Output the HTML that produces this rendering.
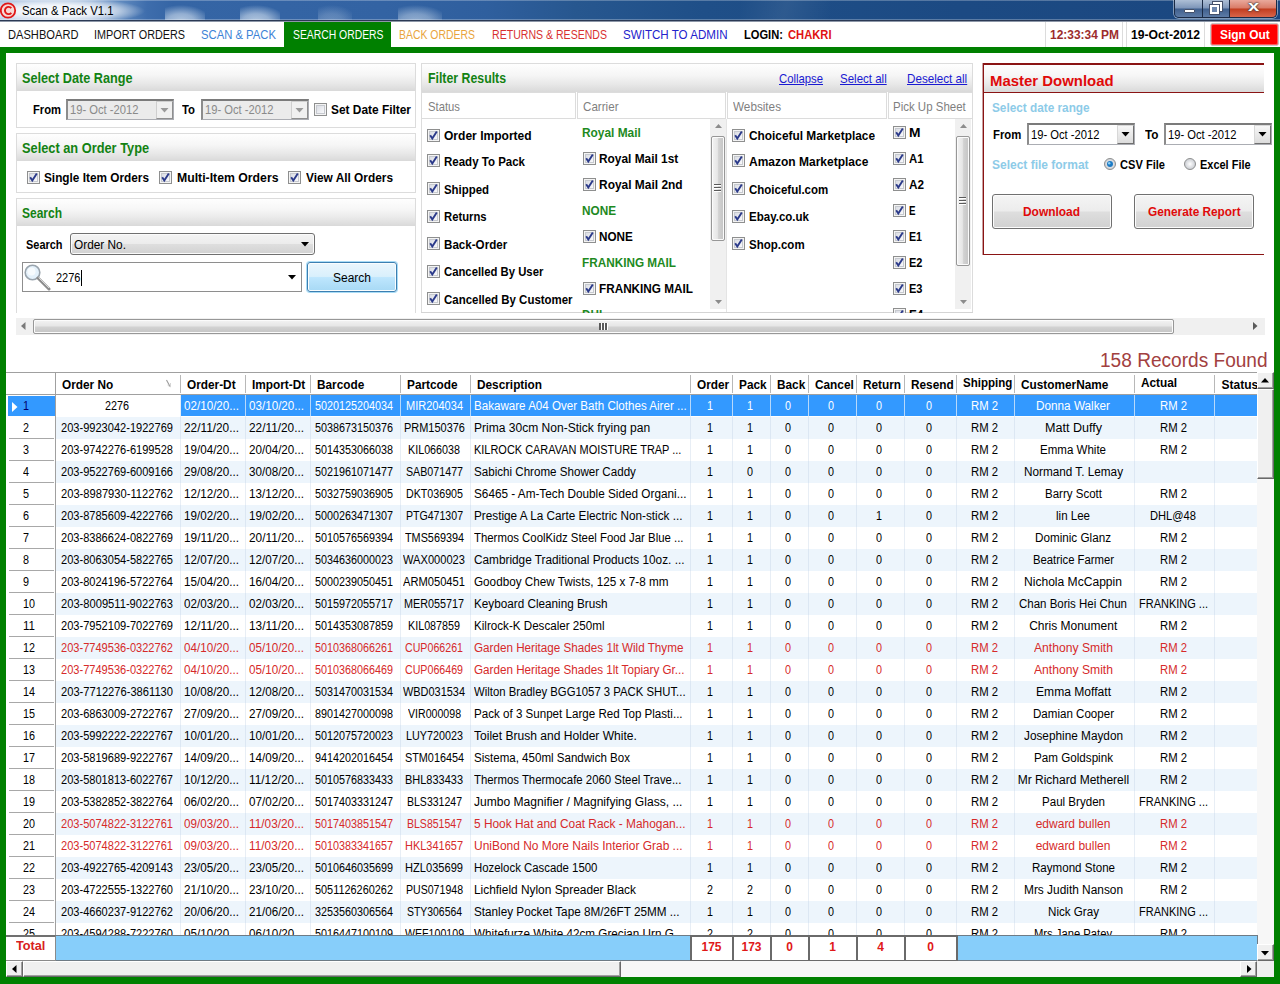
<!DOCTYPE html>
<html><head><meta charset="utf-8"><title>Scan &amp; Pack V1.1</title>
<style>
*{box-sizing:border-box;margin:0;padding:0}
html,body{width:1280px;height:984px;overflow:hidden;background:#fff}
body{font-family:"Liberation Sans",sans-serif;font-size:12px;color:#000;position:relative}
div,span,svg,.a{position:absolute}
span{white-space:pre;line-height:1.25;transform-origin:0 50%}
.cb{position:absolute}
.ph{background:linear-gradient(#fefefe,#f6f6f6 40%,#e9e9e9 70%,#d9d9d9)}
.panel{border:1px solid #dadada;background:#fff}
</style></head><body>
<svg width="0" height="0" style="position:absolute"><defs>
<linearGradient id="cbg" x1="0" y1="0" x2="1" y2="1"><stop offset="0" stop-color="#d8dbe2"/><stop offset="1" stop-color="#fbfbfd"/></linearGradient>
<radialGradient id="rbg" cx=".5" cy=".5" r=".5"><stop offset="0" stop-color="#fff"/><stop offset="1" stop-color="#c9ccd2"/></radialGradient>
</defs></svg>
<div style="left:0px;top:0px;width:1280px;height:21px;background:linear-gradient(90deg,#a9c1e0 0,#9ab6da 4%,#86a7d2 7%,#5f89be 9.5%,#3e6dac 11.5%,#3565a5 13.5%,#3363a3 30%,#2f5f9e 38%,#27578f 45%,#1f4f88 55%,#1c4a83 75%,#1b4780 100%)"></div>
<div style="left:-30px;top:-3px;width:175px;height:27px;background:radial-gradient(ellipse 50% 50% at 50% 52%,rgba(255,255,255,.92) 0,rgba(255,255,255,.85) 45%,rgba(255,255,255,.55) 70%,rgba(255,255,255,0) 100%)"></div>
<div style="left:165px;top:5px;width:40px;height:16px;background:radial-gradient(ellipse 75% 100% at 40% 100%,rgba(225,236,246,0.72) 0,rgba(215,228,242,0.58) 45%,rgba(200,218,238,0) 100%)"></div>
<div style="left:240px;top:5px;width:40px;height:16px;background:radial-gradient(ellipse 75% 100% at 40% 100%,rgba(225,236,246,0.72) 0,rgba(215,228,242,0.58) 45%,rgba(200,218,238,0) 100%)"></div>
<div style="left:318px;top:5px;width:34px;height:16px;background:radial-gradient(ellipse 75% 100% at 40% 100%,rgba(225,236,246,0.3) 0,rgba(215,228,242,0.24) 45%,rgba(200,218,238,0) 100%)"></div>
<div style="left:398px;top:5px;width:44px;height:16px;background:radial-gradient(ellipse 75% 100% at 40% 100%,rgba(225,236,246,0.55) 0,rgba(215,228,242,0.44) 45%,rgba(200,218,238,0) 100%)"></div>
<div style="left:740px;top:0px;width:90px;height:21px;background:linear-gradient(105deg,rgba(255,255,255,0) 0,rgba(255,255,255,.07) 50%,rgba(255,255,255,0) 100%)"></div>
<div style="left:0px;top:0px;width:1280px;height:1px;background:rgba(255,255,255,.25)"></div>
<svg style="left:0;top:2px" width="17" height="17" viewBox="0 0 17 17"><circle cx="8" cy="8.5" r="7.2" fill="#f6d9d6" stroke="#e01818" stroke-width="1.8"/><path d="M11.3 6.2 A3.6 3.6 0 1 0 11.3 10.8" fill="none" stroke="#e01818" stroke-width="1.9"/></svg>
<span style="left:21.5px;top:3.7px;font-size:12.5px;transform:scaleX(0.908);">Scan &amp; Pack V1.1</span>
<div style="left:0px;top:19px;width:1280px;height:1px;background:rgba(255,255,255,.28)"></div>
<div style="left:0px;top:20px;width:1280px;height:1px;background:#2b3a55"></div>
<div style="left:0px;top:21px;width:1280px;height:1px;background:#8d97a8"></div>
<div style="left:1174px;top:0;width:103px;height:18px;border:1px solid #1a2a45;border-top:none;border-radius:0 0 5px 5px;overflow:hidden;box-shadow:0 0 0 1px rgba(255,255,255,.45)"><div class="a" style="left:0;top:0;width:28px;height:17px;background:linear-gradient(#aebfd6,#7d95b8 48%,#3f5f8d 52%,#5d7ba6);border-right:1px solid #1a2a45"></div><div class="a" style="left:28px;top:0;width:27px;height:17px;background:linear-gradient(#aebfd6,#7d95b8 48%,#3f5f8d 52%,#5d7ba6);border-right:1px solid #1a2a45"></div><div class="a" style="left:55px;top:0;width:47px;height:17px;background:linear-gradient(#e9a99c,#d97a66 48%,#c13c1f 52%,#d8654a)"></div><div class="a" style="left:9px;top:9px;width:11px;height:4px;background:#fff;border:1px solid #44506a;border-radius:1px"></div><div class="a" style="left:38px;top:2px;width:9px;height:9px;border:2px solid #fff;outline:1px solid #44506a"></div><div class="a" style="left:35px;top:5px;width:9px;height:9px;border:2px solid #fff;outline:1px solid #44506a;background:#6d86ad"></div><span class="a" style="left:73px;top:-2px;font-size:15px;font-weight:bold;color:#fff;text-shadow:0 0 1px #333,0 0 1px #333,0 0 2px #555;line-height:16px;transform:scaleX(1.35)">x</span></div>
<div style="left:0px;top:22px;width:1280px;height:25px;background:#fff"></div>
<span style="left:8.0px;top:27.6px;font-size:12.5px;color:#111;transform:scaleX(0.890);">DASHBOARD</span>
<span style="left:93.5px;top:27.6px;font-size:12.5px;color:#111;transform:scaleX(0.866);">IMPORT ORDERS</span>
<span style="left:201.0px;top:27.6px;font-size:12.5px;color:#3c82d6;transform:scaleX(0.902);">SCAN &amp; PACK</span>
<div style="left:284px;top:22px;width:107px;height:25px;background:#008000"></div>
<span style="left:292.5px;top:27.6px;font-size:12.5px;color:#fff;transform:scaleX(0.830);">SEARCH ORDERS</span>
<span style="left:399.0px;top:27.6px;font-size:12.5px;color:#e9a43c;transform:scaleX(0.835);">BACK ORDERS</span>
<span style="left:492.0px;top:27.6px;font-size:12.5px;color:#d83030;transform:scaleX(0.845);">RETURNS &amp; RESENDS</span>
<span style="left:623.0px;top:27.6px;font-size:12.5px;color:#2222cc;transform:scaleX(0.927);">SWITCH TO ADMIN</span>
<span style="left:744.0px;top:27.6px;font-size:12.5px;font-weight:bold;transform:scaleX(0.890);">LOGIN: </span>
<span style="left:788.0px;top:27.6px;font-size:12.5px;font-weight:bold;color:#e01212;transform:scaleX(0.895);">CHAKRI</span>
<div style="left:1045px;top:22px;width:78px;height:25px;border-left:1px solid #dcdcdc;border-right:1px solid #dcdcdc;background:#fff"></div>
<span style="left:1049.7px;top:27.6px;font-size:12.5px;font-weight:bold;color:#9c2c2c;transform:scaleX(0.955);">12:33:34 PM</span>
<div style="left:1126px;top:22px;width:79px;height:25px;border-left:1px solid #dcdcdc;border-right:1px solid #dcdcdc;background:#fff"></div>
<span style="left:1131.0px;top:27.6px;font-size:12.5px;font-weight:bold;transform:scaleX(0.974);">19-Oct-2012</span>
<div style="left:1210px;top:23px;width:69px;height:23px;background:#f00;border:1px solid #c8c8c8;border-radius:3px;box-shadow:inset 0 0 0 1px #ff5a5a"></div>
<span style="left:1220.0px;top:27.6px;font-size:12.5px;font-weight:bold;color:#fff;transform:scaleX(0.954);">Sign Out</span>
<div style="left:0px;top:47px;width:1280px;height:6px;background:#008000"></div>
<div style="left:0px;top:47px;width:6px;height:937px;background:#008000"></div>
<div style="left:1274px;top:47px;width:6px;height:937px;background:#008000"></div>
<div style="left:0px;top:977px;width:1280px;height:7px;background:#008000"></div>
<div style="left:16px;top:63px;width:400px;height:65px;border:1px solid #dcdcdc;background:#fff;"></div>
<div class="ph" style="left:17px;top:64px;width:398px;height:27px;"></div>
<span style="left:22.0px;top:70.2px;font-size:14px;font-weight:bold;color:#128212;transform:scaleX(0.905);">Select Date Range</span>
<div style="left:16px;top:133px;width:400px;height:60px;border:1px solid #dcdcdc;background:#fff;"></div>
<div class="ph" style="left:17px;top:134px;width:398px;height:27px;"></div>
<span style="left:22.0px;top:140.2px;font-size:14px;font-weight:bold;color:#128212;transform:scaleX(0.914);">Select an Order Type</span>
<div style="left:16px;top:198px;width:400px;height:115px;border:1px solid #dcdcdc;background:#fff;border-bottom:none;"></div>
<div class="ph" style="left:17px;top:199px;width:398px;height:27px;"></div>
<span style="left:22.0px;top:204.7px;font-size:14px;font-weight:bold;color:#128212;transform:scaleX(0.857);">Search</span>
<span style="left:32.5px;top:101.7px;font-size:13px;font-weight:bold;transform:scaleX(0.862);">From</span>
<div style="left:66px;top:99px;width:108px;height:21px;background:#ebebeb;border:1px solid #abadb3;border-top:2px solid #7b7b7b;border-left:2px solid #8c8c8c"></div>
<span style="left:70.0px;top:103.2px;font-size:12.5px;color:#8a8a8a;transform:scaleX(0.896);">19- Oct -2012</span>
<div style="left:156px;top:101px;width:17px;height:18px;background:#f0f0f0;border:1px solid #cfcfcf;border-right-color:#8f8f8f;border-bottom-color:#8f8f8f"></div>
<svg style="left:160px;top:108px" width="9" height="5" viewBox="0 0 9 5"><path d="M0.5 0 L8.5 0 L4.5 4.5 Z" fill="#9a9a9a"/></svg>
<span style="left:182.0px;top:101.7px;font-size:13px;font-weight:bold;transform:scaleX(0.872);">To</span>
<div style="left:201px;top:99px;width:108px;height:21px;background:#ebebeb;border:1px solid #abadb3;border-top:2px solid #7b7b7b;border-left:2px solid #8c8c8c"></div>
<span style="left:205.0px;top:103.2px;font-size:12.5px;color:#8a8a8a;transform:scaleX(0.896);">19- Oct -2012</span>
<div style="left:291px;top:101px;width:17px;height:18px;background:#f0f0f0;border:1px solid #cfcfcf;border-right-color:#8f8f8f;border-bottom-color:#8f8f8f"></div>
<svg style="left:295px;top:108px" width="9" height="5" viewBox="0 0 9 5"><path d="M0.5 0 L8.5 0 L4.5 4.5 Z" fill="#9a9a9a"/></svg>
<svg class="cb" style="left:314px;top:103px" width="13" height="13" viewBox="0 0 13 13"><rect x=".5" y=".5" width="12" height="12" fill="#f4f4f4" stroke="#8e8f8f"/><rect x="2.5" y="2.5" width="8" height="8" fill="url(#cbg)" stroke="#c6c9cf"/></svg>
<span style="left:331.0px;top:101.7px;font-size:13px;font-weight:bold;transform:scaleX(0.915);">Set Date Filter</span>
<svg class="cb" style="left:27px;top:171px" width="13" height="13" viewBox="0 0 13 13"><rect x=".5" y=".5" width="12" height="12" fill="#f4f4f4" stroke="#8e8f8f"/><rect x="2.5" y="2.5" width="8" height="8" fill="url(#cbg)" stroke="#c6c9cf"/><path d="M3.2 6.3 L5.3 9.6 L9.8 2.6" fill="none" stroke="#2b3a8a" stroke-width="1.9" stroke-linejoin="miter"/></svg>
<span style="left:44.3px;top:169.9px;font-size:13px;font-weight:bold;transform:scaleX(0.908);">Single Item Orders</span>
<svg class="cb" style="left:159px;top:171px" width="13" height="13" viewBox="0 0 13 13"><rect x=".5" y=".5" width="12" height="12" fill="#f4f4f4" stroke="#8e8f8f"/><rect x="2.5" y="2.5" width="8" height="8" fill="url(#cbg)" stroke="#c6c9cf"/><path d="M3.2 6.3 L5.3 9.6 L9.8 2.6" fill="none" stroke="#2b3a8a" stroke-width="1.9" stroke-linejoin="miter"/></svg>
<span style="left:176.5px;top:169.9px;font-size:13px;font-weight:bold;transform:scaleX(0.943);">Multi-Item Orders</span>
<svg class="cb" style="left:288px;top:171px" width="13" height="13" viewBox="0 0 13 13"><rect x=".5" y=".5" width="12" height="12" fill="#f4f4f4" stroke="#8e8f8f"/><rect x="2.5" y="2.5" width="8" height="8" fill="url(#cbg)" stroke="#c6c9cf"/><path d="M3.2 6.3 L5.3 9.6 L9.8 2.6" fill="none" stroke="#2b3a8a" stroke-width="1.9" stroke-linejoin="miter"/></svg>
<span style="left:305.5px;top:169.9px;font-size:13px;font-weight:bold;transform:scaleX(0.912);">View All Orders</span>
<span style="left:25.5px;top:237.4px;font-size:13px;font-weight:bold;transform:scaleX(0.842);">Search</span>
<div style="left:70px;top:233px;width:245px;height:22px;border:1px solid #707070;border-radius:3px;background:linear-gradient(#f4f4f4,#ececec 48%,#dedede 52%,#d2d2d2);box-shadow:inset 0 0 0 1px #fbfbfb"></div>
<span style="left:73.5px;top:237.4px;font-size:13px;transform:scaleX(0.911);">Order No.</span>
<svg style="left:301px;top:242px" width="8" height="5" viewBox="0 0 8 5"><path d="M0 0 L8 0 L4 4.5 Z" fill="#000"/></svg>
<div style="left:22px;top:262px;width:280px;height:30px;border:1px solid #8e8e8e;background:#fff"></div>
<svg style="left:23px;top:263px" width="28" height="28" viewBox="0 0 28 28"><circle cx="9.5" cy="9.5" r="7.3" fill="#e4f1fb" stroke="#9aa4ad" stroke-width="1.6"/><circle cx="8.5" cy="8.5" r="4" fill="#f7fbfe"/><path d="M15 15 L26 26" stroke="#8c8c8c" stroke-width="3" stroke-linecap="round"/><path d="M15.5 14.5 L26 25" stroke="#d8d8d8" stroke-width="1"/></svg>
<span style="left:56.0px;top:271.2px;font-size:12.5px;transform:scaleX(0.881);">2276</span>
<div style="left:81px;top:270px;width:1px;height:16px;background:#000"></div>
<svg style="left:288px;top:275px" width="8" height="5" viewBox="0 0 8 5"><path d="M0 0 L8 0 L4 4.5 Z" fill="#000"/></svg>
<div style="left:307px;top:262px;width:90px;height:30px;border:1px solid #3c7fb1;border-radius:3px;background:linear-gradient(#eaf6fd,#d9f0fc 48%,#bee6fd 52%,#a7d9f5);box-shadow:inset 0 0 0 1px #fafdfe,0 0 0 1px #a9dcf6"></div>
<span style="left:333.0px;top:270.9px;font-size:12.5px;transform:scaleX(0.960);">Search</span>
<div style="left:421px;top:63px;width:552px;height:250px;border:1px solid #dcdcdc;border-bottom:none;background:#fff"></div>
<div class="ph" style="left:422px;top:64px;width:550px;height:28px;"></div>
<span style="left:427.5px;top:69.7px;font-size:14px;font-weight:bold;color:#128212;transform:scaleX(0.880);">Filter Results</span>
<span style="left:779.3px;top:70.7px;font-size:13px;color:#1a1ad2;transform:scaleX(0.870);text-decoration:underline;">Collapse</span>
<span style="left:840.3px;top:70.7px;font-size:13px;color:#1a1ad2;transform:scaleX(0.885);text-decoration:underline;">Select all</span>
<span style="left:907.0px;top:70.7px;font-size:13px;color:#1a1ad2;transform:scaleX(0.896);text-decoration:underline;">Deselect all</span>
<div style="left:422px;top:92px;width:550px;height:27px;background:#fff;border-top:1px solid #dcdcdc;border-bottom:1px solid #dcdcdc"></div>
<div style="left:575px;top:92px;width:3px;height:27px;background:#fff;border-left:1px solid #dcdcdc;border-right:1px solid #dcdcdc"></div>
<div style="left:725px;top:92px;width:3px;height:27px;background:#fff;border-left:1px solid #dcdcdc;border-right:1px solid #dcdcdc"></div>
<div style="left:886px;top:92px;width:3px;height:27px;background:#fff;border-left:1px solid #dcdcdc;border-right:1px solid #dcdcdc"></div>
<span style="left:428.4px;top:99.4px;font-size:13px;color:#7f7f7f;transform:scaleX(0.868);">Status</span>
<span style="left:582.9px;top:99.4px;font-size:13px;color:#7f7f7f;transform:scaleX(0.894);">Carrier</span>
<span style="left:733.0px;top:99.4px;font-size:13px;color:#7f7f7f;transform:scaleX(0.902);">Websites</span>
<span style="left:893.3px;top:99.4px;font-size:13px;color:#7f7f7f;transform:scaleX(0.883);">Pick Up Sheet</span>
<div style="left:726px;top:119px;width:1px;height:194px;background:#e4e4e4"></div>
<div style="left:421px;top:312px;width:552px;height:1px;background:#d4d4d4"></div>
<svg class="cb" style="left:427px;top:129px" width="13" height="13" viewBox="0 0 13 13"><rect x=".5" y=".5" width="12" height="12" fill="#f4f4f4" stroke="#8e8f8f"/><rect x="2.5" y="2.5" width="8" height="8" fill="url(#cbg)" stroke="#c6c9cf"/><path d="M3.2 6.3 L5.3 9.6 L9.8 2.6" fill="none" stroke="#2b3a8a" stroke-width="1.9" stroke-linejoin="miter"/></svg>
<span style="left:444.4px;top:128.1px;font-size:13px;font-weight:bold;transform:scaleX(0.926);">Order Imported</span>
<svg class="cb" style="left:427px;top:154px" width="13" height="13" viewBox="0 0 13 13"><rect x=".5" y=".5" width="12" height="12" fill="#f4f4f4" stroke="#8e8f8f"/><rect x="2.5" y="2.5" width="8" height="8" fill="url(#cbg)" stroke="#c6c9cf"/><path d="M3.2 6.3 L5.3 9.6 L9.8 2.6" fill="none" stroke="#2b3a8a" stroke-width="1.9" stroke-linejoin="miter"/></svg>
<span style="left:444.4px;top:153.9px;font-size:13px;font-weight:bold;transform:scaleX(0.885);">Ready To Pack</span>
<svg class="cb" style="left:427px;top:182px" width="13" height="13" viewBox="0 0 13 13"><rect x=".5" y=".5" width="12" height="12" fill="#f4f4f4" stroke="#8e8f8f"/><rect x="2.5" y="2.5" width="8" height="8" fill="url(#cbg)" stroke="#c6c9cf"/><path d="M3.2 6.3 L5.3 9.6 L9.8 2.6" fill="none" stroke="#2b3a8a" stroke-width="1.9" stroke-linejoin="miter"/></svg>
<span style="left:444.4px;top:181.5px;font-size:13px;font-weight:bold;transform:scaleX(0.878);">Shipped</span>
<svg class="cb" style="left:427px;top:210px" width="13" height="13" viewBox="0 0 13 13"><rect x=".5" y=".5" width="12" height="12" fill="#f4f4f4" stroke="#8e8f8f"/><rect x="2.5" y="2.5" width="8" height="8" fill="url(#cbg)" stroke="#c6c9cf"/><path d="M3.2 6.3 L5.3 9.6 L9.8 2.6" fill="none" stroke="#2b3a8a" stroke-width="1.9" stroke-linejoin="miter"/></svg>
<span style="left:444.4px;top:209.1px;font-size:13px;font-weight:bold;transform:scaleX(0.867);">Returns</span>
<svg class="cb" style="left:427px;top:237px" width="13" height="13" viewBox="0 0 13 13"><rect x=".5" y=".5" width="12" height="12" fill="#f4f4f4" stroke="#8e8f8f"/><rect x="2.5" y="2.5" width="8" height="8" fill="url(#cbg)" stroke="#c6c9cf"/><path d="M3.2 6.3 L5.3 9.6 L9.8 2.6" fill="none" stroke="#2b3a8a" stroke-width="1.9" stroke-linejoin="miter"/></svg>
<span style="left:444.4px;top:236.7px;font-size:13px;font-weight:bold;transform:scaleX(0.893);">Back-Order</span>
<svg class="cb" style="left:427px;top:265px" width="13" height="13" viewBox="0 0 13 13"><rect x=".5" y=".5" width="12" height="12" fill="#f4f4f4" stroke="#8e8f8f"/><rect x="2.5" y="2.5" width="8" height="8" fill="url(#cbg)" stroke="#c6c9cf"/><path d="M3.2 6.3 L5.3 9.6 L9.8 2.6" fill="none" stroke="#2b3a8a" stroke-width="1.9" stroke-linejoin="miter"/></svg>
<span style="left:444.4px;top:264.3px;font-size:13px;font-weight:bold;transform:scaleX(0.870);">Cancelled By User</span>
<svg class="cb" style="left:427px;top:292px" width="13" height="13" viewBox="0 0 13 13"><rect x=".5" y=".5" width="12" height="12" fill="#f4f4f4" stroke="#8e8f8f"/><rect x="2.5" y="2.5" width="8" height="8" fill="url(#cbg)" stroke="#c6c9cf"/><path d="M3.2 6.3 L5.3 9.6 L9.8 2.6" fill="none" stroke="#2b3a8a" stroke-width="1.9" stroke-linejoin="miter"/></svg>
<span style="left:444.4px;top:291.9px;font-size:13px;font-weight:bold;transform:scaleX(0.881);">Cancelled By Customer</span>
<span style="left:582.4px;top:125.0px;font-size:13px;font-weight:bold;color:#1e8a1e;transform:scaleX(0.915);">Royal Mail</span>
<svg class="cb" style="left:583px;top:152px" width="13" height="13" viewBox="0 0 13 13"><rect x=".5" y=".5" width="12" height="12" fill="#f4f4f4" stroke="#8e8f8f"/><rect x="2.5" y="2.5" width="8" height="8" fill="url(#cbg)" stroke="#c6c9cf"/><path d="M3.2 6.3 L5.3 9.6 L9.8 2.6" fill="none" stroke="#2b3a8a" stroke-width="1.9" stroke-linejoin="miter"/></svg>
<span style="left:599.4px;top:151.3px;font-size:13px;font-weight:bold;transform:scaleX(0.914);">Royal Mail 1st</span>
<svg class="cb" style="left:583px;top:178px" width="13" height="13" viewBox="0 0 13 13"><rect x=".5" y=".5" width="12" height="12" fill="#f4f4f4" stroke="#8e8f8f"/><rect x="2.5" y="2.5" width="8" height="8" fill="url(#cbg)" stroke="#c6c9cf"/><path d="M3.2 6.3 L5.3 9.6 L9.8 2.6" fill="none" stroke="#2b3a8a" stroke-width="1.9" stroke-linejoin="miter"/></svg>
<span style="left:599.4px;top:177.1px;font-size:13px;font-weight:bold;transform:scaleX(0.919);">Royal Mail 2nd</span>
<span style="left:582.4px;top:202.9px;font-size:13px;font-weight:bold;color:#1e8a1e;transform:scaleX(0.905);">NONE</span>
<svg class="cb" style="left:583px;top:230px" width="13" height="13" viewBox="0 0 13 13"><rect x=".5" y=".5" width="12" height="12" fill="#f4f4f4" stroke="#8e8f8f"/><rect x="2.5" y="2.5" width="8" height="8" fill="url(#cbg)" stroke="#c6c9cf"/><path d="M3.2 6.3 L5.3 9.6 L9.8 2.6" fill="none" stroke="#2b3a8a" stroke-width="1.9" stroke-linejoin="miter"/></svg>
<span style="left:599.4px;top:229.2px;font-size:13px;font-weight:bold;transform:scaleX(0.900);">NONE</span>
<span style="left:582.4px;top:254.5px;font-size:13px;font-weight:bold;color:#1e8a1e;transform:scaleX(0.904);">FRANKING MAIL</span>
<svg class="cb" style="left:583px;top:282px" width="13" height="13" viewBox="0 0 13 13"><rect x=".5" y=".5" width="12" height="12" fill="#f4f4f4" stroke="#8e8f8f"/><rect x="2.5" y="2.5" width="8" height="8" fill="url(#cbg)" stroke="#c6c9cf"/><path d="M3.2 6.3 L5.3 9.6 L9.8 2.6" fill="none" stroke="#2b3a8a" stroke-width="1.9" stroke-linejoin="miter"/></svg>
<span style="left:599.4px;top:281.0px;font-size:13px;font-weight:bold;transform:scaleX(0.903);">FRANKING MAIL</span>
<div style="left:576px;top:300px;width:134px;height:13px;overflow:hidden"><span class="a" style="left:6.4px;top:6.5px;font-size:13px;font-weight:bold;color:#1e8a1e;transform:scaleX(.9)">DHL</span></div>
<div style="left:710px;top:119px;width:16px;height:190px;background:#f0f0f0"></div>
<svg style="left:714.5px;top:124px" width="7" height="4" viewBox="0 0 7 4"><path d="M0 4 L3.5 0 L7 4 Z" fill="#8c8c8c"/></svg>
<svg style="left:714.5px;top:300px" width="7" height="4" viewBox="0 0 7 4"><path d="M0 0 L7 0 L3.5 4 Z" fill="#8c8c8c"/></svg>
<div style="left:711px;top:136px;width:14px;height:105px;border:1px solid #979797;border-radius:2px;background:linear-gradient(90deg,#f3f3f3,#e6e6e6 45%,#d2d2d2 55%,#c4c4c4);box-shadow:inset 0 0 0 1px #fbfbfb"></div>
<div style="left:714px;top:184px;width:7px;height:2px;background:#5a5a5a;border-bottom:1px solid #fff"></div>
<div style="left:714px;top:187px;width:7px;height:2px;background:#5a5a5a;border-bottom:1px solid #fff"></div>
<div style="left:714px;top:190px;width:7px;height:2px;background:#5a5a5a;border-bottom:1px solid #fff"></div>
<svg class="cb" style="left:732px;top:129px" width="13" height="13" viewBox="0 0 13 13"><rect x=".5" y=".5" width="12" height="12" fill="#f4f4f4" stroke="#8e8f8f"/><rect x="2.5" y="2.5" width="8" height="8" fill="url(#cbg)" stroke="#c6c9cf"/><path d="M3.2 6.3 L5.3 9.6 L9.8 2.6" fill="none" stroke="#2b3a8a" stroke-width="1.9" stroke-linejoin="miter"/></svg>
<span style="left:749.0px;top:128.1px;font-size:13px;font-weight:bold;transform:scaleX(0.913);">Choiceful Marketplace</span>
<svg class="cb" style="left:732px;top:154px" width="13" height="13" viewBox="0 0 13 13"><rect x=".5" y=".5" width="12" height="12" fill="#f4f4f4" stroke="#8e8f8f"/><rect x="2.5" y="2.5" width="8" height="8" fill="url(#cbg)" stroke="#c6c9cf"/><path d="M3.2 6.3 L5.3 9.6 L9.8 2.6" fill="none" stroke="#2b3a8a" stroke-width="1.9" stroke-linejoin="miter"/></svg>
<span style="left:749.0px;top:153.9px;font-size:13px;font-weight:bold;transform:scaleX(0.923);">Amazon Marketplace</span>
<svg class="cb" style="left:732px;top:182px" width="13" height="13" viewBox="0 0 13 13"><rect x=".5" y=".5" width="12" height="12" fill="#f4f4f4" stroke="#8e8f8f"/><rect x="2.5" y="2.5" width="8" height="8" fill="url(#cbg)" stroke="#c6c9cf"/><path d="M3.2 6.3 L5.3 9.6 L9.8 2.6" fill="none" stroke="#2b3a8a" stroke-width="1.9" stroke-linejoin="miter"/></svg>
<span style="left:749.0px;top:181.5px;font-size:13px;font-weight:bold;transform:scaleX(0.885);">Choiceful.com</span>
<svg class="cb" style="left:732px;top:210px" width="13" height="13" viewBox="0 0 13 13"><rect x=".5" y=".5" width="12" height="12" fill="#f4f4f4" stroke="#8e8f8f"/><rect x="2.5" y="2.5" width="8" height="8" fill="url(#cbg)" stroke="#c6c9cf"/><path d="M3.2 6.3 L5.3 9.6 L9.8 2.6" fill="none" stroke="#2b3a8a" stroke-width="1.9" stroke-linejoin="miter"/></svg>
<span style="left:749.0px;top:209.1px;font-size:13px;font-weight:bold;transform:scaleX(0.887);">Ebay.co.uk</span>
<svg class="cb" style="left:732px;top:237px" width="13" height="13" viewBox="0 0 13 13"><rect x=".5" y=".5" width="12" height="12" fill="#f4f4f4" stroke="#8e8f8f"/><rect x="2.5" y="2.5" width="8" height="8" fill="url(#cbg)" stroke="#c6c9cf"/><path d="M3.2 6.3 L5.3 9.6 L9.8 2.6" fill="none" stroke="#2b3a8a" stroke-width="1.9" stroke-linejoin="miter"/></svg>
<span style="left:749.0px;top:236.7px;font-size:13px;font-weight:bold;transform:scaleX(0.885);">Shop.com</span>
<svg class="cb" style="left:893px;top:126px" width="13" height="13" viewBox="0 0 13 13"><rect x=".5" y=".5" width="12" height="12" fill="#f4f4f4" stroke="#8e8f8f"/><rect x="2.5" y="2.5" width="8" height="8" fill="url(#cbg)" stroke="#c6c9cf"/><path d="M3.2 6.3 L5.3 9.6 L9.8 2.6" fill="none" stroke="#2b3a8a" stroke-width="1.9" stroke-linejoin="miter"/></svg>
<span style="left:909.3px;top:125.4px;font-size:13px;font-weight:bold;transform:scaleX(1.062);">M</span>
<svg class="cb" style="left:893px;top:152px" width="13" height="13" viewBox="0 0 13 13"><rect x=".5" y=".5" width="12" height="12" fill="#f4f4f4" stroke="#8e8f8f"/><rect x="2.5" y="2.5" width="8" height="8" fill="url(#cbg)" stroke="#c6c9cf"/><path d="M3.2 6.3 L5.3 9.6 L9.8 2.6" fill="none" stroke="#2b3a8a" stroke-width="1.9" stroke-linejoin="miter"/></svg>
<span style="left:909.3px;top:151.2px;font-size:13px;font-weight:bold;transform:scaleX(0.873);">A1</span>
<svg class="cb" style="left:893px;top:178px" width="13" height="13" viewBox="0 0 13 13"><rect x=".5" y=".5" width="12" height="12" fill="#f4f4f4" stroke="#8e8f8f"/><rect x="2.5" y="2.5" width="8" height="8" fill="url(#cbg)" stroke="#c6c9cf"/><path d="M3.2 6.3 L5.3 9.6 L9.8 2.6" fill="none" stroke="#2b3a8a" stroke-width="1.9" stroke-linejoin="miter"/></svg>
<span style="left:909.3px;top:177.0px;font-size:13px;font-weight:bold;transform:scaleX(0.903);">A2</span>
<svg class="cb" style="left:893px;top:204px" width="13" height="13" viewBox="0 0 13 13"><rect x=".5" y=".5" width="12" height="12" fill="#f4f4f4" stroke="#8e8f8f"/><rect x="2.5" y="2.5" width="8" height="8" fill="url(#cbg)" stroke="#c6c9cf"/><path d="M3.2 6.3 L5.3 9.6 L9.8 2.6" fill="none" stroke="#2b3a8a" stroke-width="1.9" stroke-linejoin="miter"/></svg>
<span style="left:909.3px;top:202.8px;font-size:13px;font-weight:bold;transform:scaleX(0.750);">E</span>
<svg class="cb" style="left:893px;top:230px" width="13" height="13" viewBox="0 0 13 13"><rect x=".5" y=".5" width="12" height="12" fill="#f4f4f4" stroke="#8e8f8f"/><rect x="2.5" y="2.5" width="8" height="8" fill="url(#cbg)" stroke="#c6c9cf"/><path d="M3.2 6.3 L5.3 9.6 L9.8 2.6" fill="none" stroke="#2b3a8a" stroke-width="1.9" stroke-linejoin="miter"/></svg>
<span style="left:909.3px;top:229.1px;font-size:13px;font-weight:bold;transform:scaleX(0.818);">E1</span>
<svg class="cb" style="left:893px;top:256px" width="13" height="13" viewBox="0 0 13 13"><rect x=".5" y=".5" width="12" height="12" fill="#f4f4f4" stroke="#8e8f8f"/><rect x="2.5" y="2.5" width="8" height="8" fill="url(#cbg)" stroke="#c6c9cf"/><path d="M3.2 6.3 L5.3 9.6 L9.8 2.6" fill="none" stroke="#2b3a8a" stroke-width="1.9" stroke-linejoin="miter"/></svg>
<span style="left:909.3px;top:254.9px;font-size:13px;font-weight:bold;transform:scaleX(0.849);">E2</span>
<svg class="cb" style="left:893px;top:282px" width="13" height="13" viewBox="0 0 13 13"><rect x=".5" y=".5" width="12" height="12" fill="#f4f4f4" stroke="#8e8f8f"/><rect x="2.5" y="2.5" width="8" height="8" fill="url(#cbg)" stroke="#c6c9cf"/><path d="M3.2 6.3 L5.3 9.6 L9.8 2.6" fill="none" stroke="#2b3a8a" stroke-width="1.9" stroke-linejoin="miter"/></svg>
<span style="left:909.3px;top:280.7px;font-size:13px;font-weight:bold;transform:scaleX(0.849);">E3</span>
<div style="left:888px;top:300px;width:66px;height:13px;overflow:hidden"><svg class="cb" style="left:5px;top:8px" width="13" height="13" viewBox="0 0 13 13"><rect x=".5" y=".5" width="12" height="12" fill="#f4f4f4" stroke="#8e8f8f"/><rect x="2.5" y="2.5" width="8" height="8" fill="url(#cbg)" stroke="#c6c9cf"/><path d="M3.2 6.3 L5.3 9.6 L9.8 2.6" fill="none" stroke="#2b3a8a" stroke-width="1.9" stroke-linejoin="miter"/></svg><span class="a" style="left:21.3px;top:6.5px;font-size:13px;font-weight:bold;transform:scaleX(.9)">E4</span></div>
<div style="left:955px;top:119px;width:16px;height:190px;background:#f0f0f0"></div>
<svg style="left:959.5px;top:124px" width="7" height="4" viewBox="0 0 7 4"><path d="M0 4 L3.5 0 L7 4 Z" fill="#8c8c8c"/></svg>
<svg style="left:959.5px;top:300px" width="7" height="4" viewBox="0 0 7 4"><path d="M0 0 L7 0 L3.5 4 Z" fill="#8c8c8c"/></svg>
<div style="left:956px;top:136px;width:14px;height:130px;border:1px solid #979797;border-radius:2px;background:linear-gradient(90deg,#f3f3f3,#e6e6e6 45%,#d2d2d2 55%,#c4c4c4);box-shadow:inset 0 0 0 1px #fbfbfb"></div>
<div style="left:959px;top:197px;width:7px;height:2px;background:#5a5a5a;border-bottom:1px solid #fff"></div>
<div style="left:959px;top:200px;width:7px;height:2px;background:#5a5a5a;border-bottom:1px solid #fff"></div>
<div style="left:959px;top:203px;width:7px;height:2px;background:#5a5a5a;border-bottom:1px solid #fff"></div>
<div style="left:983px;top:63px;width:281px;height:192px;border:2px solid #8a1414;border-right:none;background:#fff;border-bottom-width:1px;border-left-width:1px;box-shadow:-1px 0 0 #c9a0a0"></div>
<div class="ph" style="left:984px;top:65px;width:280px;height:28px;border-bottom:1px solid #8a1414"></div>
<span style="left:990.4px;top:71.4px;font-size:15.5px;font-weight:bold;color:#e00a0a;transform:scaleX(0.963);">Master Download</span>
<span style="left:992.4px;top:100.6px;font-size:12.5px;font-weight:bold;color:#8dcbe8;transform:scaleX(0.943);">Select date range</span>
<span style="left:992.7px;top:126.8px;font-size:13px;font-weight:bold;transform:scaleX(0.871);">From</span>
<div style="left:1027px;top:123px;width:108px;height:22px;background:#fff;border:1px solid #abadb3;border-top:2px solid #7b7b7b;border-left:2px solid #8c8c8c"></div>
<span style="left:1031.0px;top:127.8px;font-size:12.5px;color:#000;transform:scaleX(0.896);">19- Oct -2012</span>
<div style="left:1117px;top:125px;width:17px;height:19px;background:linear-gradient(#f7f7f7,#dcdcdc);border:1px solid #d8d8d8;border-right-color:#707070;border-bottom-color:#707070"></div>
<svg style="left:1121px;top:132px" width="9" height="5" viewBox="0 0 9 5"><path d="M0.5 0 L8.5 0 L4.5 4.5 Z" fill="#000"/></svg>
<span style="left:1145.0px;top:126.8px;font-size:13px;font-weight:bold;transform:scaleX(0.905);">To</span>
<div style="left:1164px;top:123px;width:108px;height:22px;background:#fff;border:1px solid #abadb3;border-top:2px solid #7b7b7b;border-left:2px solid #8c8c8c"></div>
<span style="left:1168.0px;top:127.8px;font-size:12.5px;color:#000;transform:scaleX(0.896);">19- Oct -2012</span>
<div style="left:1254px;top:125px;width:17px;height:19px;background:linear-gradient(#f7f7f7,#dcdcdc);border:1px solid #d8d8d8;border-right-color:#707070;border-bottom-color:#707070"></div>
<svg style="left:1258px;top:132px" width="9" height="5" viewBox="0 0 9 5"><path d="M0.5 0 L8.5 0 L4.5 4.5 Z" fill="#000"/></svg>
<span style="left:992.4px;top:157.6px;font-size:12.5px;font-weight:bold;color:#8dcbe8;transform:scaleX(0.959);">Select file format</span>
<svg style="left:1104px;top:158px" width="12" height="12" viewBox="0 0 12 12"><circle cx="6" cy="6" r="5.5" fill="url(#rbg)" stroke="#8e8f8f"/><circle cx="6" cy="6" r="3" fill="#1c7ac4"/><circle cx="5.2" cy="5.2" r="1.2" fill="#8fd0f5"/></svg>
<span style="left:1120.0px;top:157.0px;font-size:13px;font-weight:bold;transform:scaleX(0.853);">CSV File</span>
<svg style="left:1184px;top:158px" width="12" height="12" viewBox="0 0 12 12"><circle cx="6" cy="6" r="5.5" fill="url(#rbg)" stroke="#8e8f8f"/></svg>
<span style="left:1200.4px;top:157.0px;font-size:13px;font-weight:bold;transform:scaleX(0.844);">Excel File</span>
<div style="left:992px;top:194px;width:120px;height:35px;border:1px solid #707070;border-radius:3px;background:linear-gradient(#f4f4f4,#ececec 48%,#dedede 52%,#d1d1d1);box-shadow:inset 0 0 0 1px #fcfcfc"></div>
<span style="left:1023.0px;top:204.2px;font-size:13px;font-weight:bold;color:#e00a0a;transform:scaleX(0.918);">Download</span>
<div style="left:1134px;top:194px;width:120px;height:35px;border:1px solid #707070;border-radius:3px;background:linear-gradient(#f4f4f4,#ececec 48%,#dedede 52%,#d1d1d1);box-shadow:inset 0 0 0 1px #fcfcfc"></div>
<span style="left:1147.7px;top:204.2px;font-size:13px;font-weight:bold;color:#e00a0a;transform:scaleX(0.909);">Generate Report</span>
<div style="left:16px;top:318px;width:1249px;height:17px;background:#f0f0f0"></div>
<svg style="left:21px;top:322px" width="5" height="8" viewBox="0 0 5 8"><path d="M4.5 0 L0 4 L4.5 8 Z" fill="#7a7a7a"/></svg>
<svg style="left:1253px;top:322px" width="5" height="8" viewBox="0 0 5 8"><path d="M0 0 L4.5 4 L0 8 Z" fill="#5a5a5a"/></svg>
<div style="left:33px;top:319px;width:1141px;height:15px;border:1px solid #979797;border-radius:2px;background:linear-gradient(#f3f3f3,#e6e6e6 45%,#d2d2d2 55%,#c4c4c4);box-shadow:inset 0 0 0 1px #fbfbfb"></div>
<div style="left:599px;top:323px;width:3px;height:7px;background:#5a5a5a;border-right:1px solid #fff"></div>
<div style="left:602px;top:323px;width:3px;height:7px;background:#5a5a5a;border-right:1px solid #fff"></div>
<div style="left:605px;top:323px;width:3px;height:7px;background:#5a5a5a;border-right:1px solid #fff"></div>
<span style="left:1100.0px;top:348.1px;font-size:20px;color:#a24040;transform:scaleX(0.954);">158 Records Found</span>
<div style="left:6px;top:372px;width:1267px;height:1px;background:#a0a0a0"></div>
<div style="left:6px;top:373px;width:1251px;height:21px;background:#fff"></div>
<div style="left:6px;top:394px;width:1251px;height:1px;background:#a0a0a0"></div>
<div style="left:55px;top:373px;width:1px;height:22px;background:#a0a0a0"></div>
<div style="left:180px;top:375px;width:1px;height:18px;background:#b8b8b8"></div>
<div style="left:245px;top:375px;width:1px;height:18px;background:#b8b8b8"></div>
<div style="left:310px;top:375px;width:1px;height:18px;background:#b8b8b8"></div>
<div style="left:400px;top:375px;width:1px;height:18px;background:#b8b8b8"></div>
<div style="left:470px;top:375px;width:1px;height:18px;background:#b8b8b8"></div>
<div style="left:690px;top:375px;width:1px;height:18px;background:#b8b8b8"></div>
<div style="left:732px;top:375px;width:1px;height:18px;background:#b8b8b8"></div>
<div style="left:770px;top:375px;width:1px;height:18px;background:#b8b8b8"></div>
<div style="left:808px;top:375px;width:1px;height:18px;background:#b8b8b8"></div>
<div style="left:856px;top:375px;width:1px;height:18px;background:#b8b8b8"></div>
<div style="left:904px;top:375px;width:1px;height:18px;background:#b8b8b8"></div>
<div style="left:956px;top:375px;width:1px;height:18px;background:#b8b8b8"></div>
<div style="left:1014px;top:375px;width:1px;height:18px;background:#b8b8b8"></div>
<div style="left:1134px;top:375px;width:1px;height:18px;background:#b8b8b8"></div>
<div style="left:1214px;top:375px;width:1px;height:18px;background:#b8b8b8"></div>
<span style="left:62.0px;top:377.6px;font-size:12px;font-weight:bold;transform:scaleX(0.985);">Order No</span>
<span style="left:187.0px;top:377.6px;font-size:12px;font-weight:bold;transform:scaleX(0.985);">Order-Dt</span>
<span style="left:252.0px;top:377.6px;font-size:12px;font-weight:bold;transform:scaleX(0.985);">Import-Dt</span>
<span style="left:317.0px;top:377.6px;font-size:12px;font-weight:bold;transform:scaleX(0.985);">Barcode</span>
<span style="left:407.0px;top:377.6px;font-size:12px;font-weight:bold;transform:scaleX(0.985);">Partcode</span>
<span style="left:477.0px;top:377.6px;font-size:12px;font-weight:bold;transform:scaleX(0.985);">Description</span>
<span style="left:697.0px;top:377.6px;font-size:12px;font-weight:bold;transform:scaleX(0.985);">Order</span>
<span style="left:739.0px;top:377.6px;font-size:12px;font-weight:bold;transform:scaleX(0.985);">Pack</span>
<span style="left:777.0px;top:377.6px;font-size:12px;font-weight:bold;transform:scaleX(0.985);">Back</span>
<span style="left:815.0px;top:377.6px;font-size:12px;font-weight:bold;transform:scaleX(0.985);">Cancel</span>
<span style="left:863.0px;top:377.6px;font-size:12px;font-weight:bold;transform:scaleX(0.985);">Return</span>
<span style="left:911.0px;top:377.6px;font-size:12px;font-weight:bold;transform:scaleX(0.985);">Resend</span>
<span style="left:962.5px;top:375.8px;font-size:12px;font-weight:bold;transform:scaleX(0.960);">Shipping</span>
<span style="left:1020.5px;top:377.6px;font-size:12px;font-weight:bold;transform:scaleX(0.985);">CustomerName</span>
<span style="left:1140.5px;top:375.8px;font-size:12px;font-weight:bold;transform:scaleX(0.985);">Actual</span>
<div style="left:1215px;top:373px;width:42px;height:21px;overflow:hidden"><span class="a" style="left:6.5px;top:4.6px;font-size:12px;font-weight:bold">Status</span></div>
<svg style="left:165px;top:379px" width="8" height="9" viewBox="0 0 8 9"><path d="M1.5 1 L5 7.5" stroke="#9a9a9a" stroke-width="1.1" fill="none"/><path d="M5.5 4 L5.3 8 L2.5 6" stroke="#c8c8c8" stroke-width=".8" fill="none"/></svg>
<div id="rows" style="left:6px;top:395px;width:1251px;height:540px;overflow:hidden;background:#fff">
<div class="a" style="left:2px;top:1px;width:47px;height:20px;background:#3399ff"></div>
<div class="a" style="left:175px;top:0;width:1076px;height:21px;background:#3399ff"></div>
<svg class="a" style="left:5.5px;top:6.5px" width="6" height="10" viewBox="0 0 6 10"><path d="M0 0 L5.5 5 L0 10 Z" fill="#fff"/></svg>
<span style="left:17.0px;top:3.5px;font-size:12px;color:#00006a;transform:scaleX(0.899);">1</span>
<span style="left:98.7px;top:3.5px;font-size:12px;color:#000;transform:scaleX(0.899);">2276</span>
<span style="left:178.2px;top:3.5px;font-size:12px;color:#fff;transform:scaleX(0.970);">02/10/20...</span>
<span style="left:243.2px;top:3.5px;font-size:12px;color:#fff;transform:scaleX(0.970);">03/10/20...</span>
<span style="left:309.2px;top:3.5px;font-size:12px;color:#fff;transform:scaleX(0.899);">5020125204034</span>
<span style="left:399.7px;top:3.5px;font-size:12px;color:#fff;transform:scaleX(0.919);">MIR204034</span>
<span style="left:468.0px;top:3.5px;font-size:12px;color:#fff;transform:scaleX(0.966);">Bakaware A04 Over Bath Clothes Airer ...</span>
<span style="left:701.2px;top:3.5px;font-size:12px;color:#fff;transform:scaleX(0.899);">1</span>
<span style="left:741.2px;top:3.5px;font-size:12px;color:#fff;transform:scaleX(0.899);">1</span>
<span style="left:779.2px;top:3.5px;font-size:12px;color:#fff;transform:scaleX(0.899);">0</span>
<span style="left:822.2px;top:3.5px;font-size:12px;color:#fff;transform:scaleX(0.899);">0</span>
<span style="left:870.2px;top:3.5px;font-size:12px;color:#fff;transform:scaleX(0.899);">0</span>
<span style="left:920.2px;top:3.5px;font-size:12px;color:#fff;transform:scaleX(0.899);">0</span>
<span style="left:964.7px;top:3.5px;font-size:12px;color:#fff;transform:scaleX(0.942);">RM 2</span>
<span style="left:1030.2px;top:3.5px;font-size:12px;color:#fff;transform:scaleX(0.979);">Donna Walker</span>
<span style="left:1153.7px;top:3.5px;font-size:12px;color:#fff;transform:scaleX(0.942);">RM 2</span>
<div class="a" style="left:49px;top:22px;width:1202px;height:22px;background:#edf5fc"></div>
<div class="a" style="left:3px;top:43px;width:45px;height:1px;background:#a8a8a8"></div>
<span style="left:17.2px;top:25.5px;font-size:12px;transform:scaleX(0.899);">2</span>
<span style="left:54.7px;top:25.5px;font-size:12px;color:#000;transform:scaleX(0.922);">203-9923042-1922769</span>
<span style="left:178.2px;top:25.5px;font-size:12px;color:#000;transform:scaleX(0.985);">22/11/20...</span>
<span style="left:243.2px;top:25.5px;font-size:12px;color:#000;transform:scaleX(0.985);">22/11/20...</span>
<span style="left:309.2px;top:25.5px;font-size:12px;color:#000;transform:scaleX(0.899);">5038673150376</span>
<span style="left:397.7px;top:25.5px;font-size:12px;color:#000;transform:scaleX(0.914);">PRM150376</span>
<span style="left:468.0px;top:25.5px;font-size:12px;color:#000;transform:scaleX(1.004);">Prima 30cm Non-Stick frying pan</span>
<span style="left:701.2px;top:25.5px;font-size:12px;color:#000;transform:scaleX(0.899);">1</span>
<span style="left:741.2px;top:25.5px;font-size:12px;color:#000;transform:scaleX(0.899);">1</span>
<span style="left:779.2px;top:25.5px;font-size:12px;color:#000;transform:scaleX(0.899);">0</span>
<span style="left:822.2px;top:25.5px;font-size:12px;color:#000;transform:scaleX(0.899);">0</span>
<span style="left:870.2px;top:25.5px;font-size:12px;color:#000;transform:scaleX(0.899);">0</span>
<span style="left:920.2px;top:25.5px;font-size:12px;color:#000;transform:scaleX(0.899);">0</span>
<span style="left:964.7px;top:25.5px;font-size:12px;color:#000;transform:scaleX(0.942);">RM 2</span>
<span style="left:1038.7px;top:25.5px;font-size:12px;color:#000;transform:scaleX(1.047);">Matt Duffy</span>
<span style="left:1153.7px;top:25.5px;font-size:12px;color:#000;transform:scaleX(0.942);">RM 2</span>
<div class="a" style="left:3px;top:65px;width:45px;height:1px;background:#a8a8a8"></div>
<span style="left:17.2px;top:47.5px;font-size:12px;transform:scaleX(0.899);">3</span>
<span style="left:54.7px;top:47.5px;font-size:12px;color:#000;transform:scaleX(0.922);">203-9742276-6199528</span>
<span style="left:178.2px;top:47.5px;font-size:12px;color:#000;transform:scaleX(0.970);">19/04/20...</span>
<span style="left:243.2px;top:47.5px;font-size:12px;color:#000;transform:scaleX(0.970);">20/04/20...</span>
<span style="left:309.2px;top:47.5px;font-size:12px;color:#000;transform:scaleX(0.899);">5014353066038</span>
<span style="left:402.2px;top:47.5px;font-size:12px;color:#000;transform:scaleX(0.896);">KIL066038</span>
<span style="left:468.0px;top:47.5px;font-size:12px;color:#000;transform:scaleX(0.913);">KILROCK CARAVAN MOISTURE TRAP ...</span>
<span style="left:701.2px;top:47.5px;font-size:12px;color:#000;transform:scaleX(0.899);">1</span>
<span style="left:741.2px;top:47.5px;font-size:12px;color:#000;transform:scaleX(0.899);">1</span>
<span style="left:779.2px;top:47.5px;font-size:12px;color:#000;transform:scaleX(0.899);">0</span>
<span style="left:822.2px;top:47.5px;font-size:12px;color:#000;transform:scaleX(0.899);">0</span>
<span style="left:870.2px;top:47.5px;font-size:12px;color:#000;transform:scaleX(0.899);">0</span>
<span style="left:920.2px;top:47.5px;font-size:12px;color:#000;transform:scaleX(0.899);">0</span>
<span style="left:964.7px;top:47.5px;font-size:12px;color:#000;transform:scaleX(0.942);">RM 2</span>
<span style="left:1034.2px;top:47.5px;font-size:12px;color:#000;transform:scaleX(0.961);">Emma White</span>
<span style="left:1153.7px;top:47.5px;font-size:12px;color:#000;transform:scaleX(0.942);">RM 2</span>
<div class="a" style="left:49px;top:66px;width:1202px;height:22px;background:#edf5fc"></div>
<div class="a" style="left:3px;top:87px;width:45px;height:1px;background:#a8a8a8"></div>
<span style="left:17.2px;top:69.5px;font-size:12px;transform:scaleX(0.899);">4</span>
<span style="left:54.7px;top:69.5px;font-size:12px;color:#000;transform:scaleX(0.922);">203-9522769-6009166</span>
<span style="left:178.2px;top:69.5px;font-size:12px;color:#000;transform:scaleX(0.970);">29/08/20...</span>
<span style="left:243.2px;top:69.5px;font-size:12px;color:#000;transform:scaleX(0.970);">30/08/20...</span>
<span style="left:309.2px;top:69.5px;font-size:12px;color:#000;transform:scaleX(0.899);">5021961071477</span>
<span style="left:399.7px;top:69.5px;font-size:12px;color:#000;transform:scaleX(0.890);">SAB071477</span>
<span style="left:468.0px;top:69.5px;font-size:12px;color:#000;transform:scaleX(0.967);">Sabichi Chrome Shower Caddy</span>
<span style="left:701.2px;top:69.5px;font-size:12px;color:#000;transform:scaleX(0.899);">1</span>
<span style="left:741.2px;top:69.5px;font-size:12px;color:#000;transform:scaleX(0.899);">0</span>
<span style="left:779.2px;top:69.5px;font-size:12px;color:#000;transform:scaleX(0.899);">0</span>
<span style="left:822.2px;top:69.5px;font-size:12px;color:#000;transform:scaleX(0.899);">0</span>
<span style="left:870.2px;top:69.5px;font-size:12px;color:#000;transform:scaleX(0.899);">0</span>
<span style="left:920.2px;top:69.5px;font-size:12px;color:#000;transform:scaleX(0.899);">0</span>
<span style="left:964.7px;top:69.5px;font-size:12px;color:#000;transform:scaleX(0.942);">RM 2</span>
<span style="left:1017.7px;top:69.5px;font-size:12px;color:#000;transform:scaleX(0.979);">Normand T. Lemay</span>
<div class="a" style="left:3px;top:109px;width:45px;height:1px;background:#a8a8a8"></div>
<span style="left:17.2px;top:91.5px;font-size:12px;transform:scaleX(0.899);">5</span>
<span style="left:54.7px;top:91.5px;font-size:12px;color:#000;transform:scaleX(0.929);">203-8987930-1122762</span>
<span style="left:178.2px;top:91.5px;font-size:12px;color:#000;transform:scaleX(0.970);">12/12/20...</span>
<span style="left:243.2px;top:91.5px;font-size:12px;color:#000;transform:scaleX(0.970);">13/12/20...</span>
<span style="left:309.2px;top:91.5px;font-size:12px;color:#000;transform:scaleX(0.899);">5032759036905</span>
<span style="left:399.7px;top:91.5px;font-size:12px;color:#000;transform:scaleX(0.890);">DKT036905</span>
<span style="left:468.0px;top:91.5px;font-size:12px;color:#000;transform:scaleX(0.980);">S6465 - Am-Tech Double Sided Organi...</span>
<span style="left:701.2px;top:91.5px;font-size:12px;color:#000;transform:scaleX(0.899);">1</span>
<span style="left:741.2px;top:91.5px;font-size:12px;color:#000;transform:scaleX(0.899);">1</span>
<span style="left:779.2px;top:91.5px;font-size:12px;color:#000;transform:scaleX(0.899);">0</span>
<span style="left:822.2px;top:91.5px;font-size:12px;color:#000;transform:scaleX(0.899);">0</span>
<span style="left:870.2px;top:91.5px;font-size:12px;color:#000;transform:scaleX(0.899);">0</span>
<span style="left:920.2px;top:91.5px;font-size:12px;color:#000;transform:scaleX(0.899);">0</span>
<span style="left:964.7px;top:91.5px;font-size:12px;color:#000;transform:scaleX(0.942);">RM 2</span>
<span style="left:1038.7px;top:91.5px;font-size:12px;color:#000;transform:scaleX(0.960);">Barry Scott</span>
<span style="left:1153.7px;top:91.5px;font-size:12px;color:#000;transform:scaleX(0.942);">RM 2</span>
<div class="a" style="left:49px;top:110px;width:1202px;height:22px;background:#edf5fc"></div>
<div class="a" style="left:3px;top:131px;width:45px;height:1px;background:#a8a8a8"></div>
<span style="left:17.2px;top:113.5px;font-size:12px;transform:scaleX(0.899);">6</span>
<span style="left:54.7px;top:113.5px;font-size:12px;color:#000;transform:scaleX(0.922);">203-8785609-4222766</span>
<span style="left:178.2px;top:113.5px;font-size:12px;color:#000;transform:scaleX(0.970);">19/02/20...</span>
<span style="left:243.2px;top:113.5px;font-size:12px;color:#000;transform:scaleX(0.970);">19/02/20...</span>
<span style="left:309.2px;top:113.5px;font-size:12px;color:#000;transform:scaleX(0.899);">5000263471307</span>
<span style="left:399.7px;top:113.5px;font-size:12px;color:#000;transform:scaleX(0.881);">PTG471307</span>
<span style="left:468.0px;top:113.5px;font-size:12px;color:#000;transform:scaleX(0.980);">Prestige A La Carte Electric Non-stick ...</span>
<span style="left:701.2px;top:113.5px;font-size:12px;color:#000;transform:scaleX(0.899);">1</span>
<span style="left:741.2px;top:113.5px;font-size:12px;color:#000;transform:scaleX(0.899);">1</span>
<span style="left:779.2px;top:113.5px;font-size:12px;color:#000;transform:scaleX(0.899);">0</span>
<span style="left:822.2px;top:113.5px;font-size:12px;color:#000;transform:scaleX(0.899);">0</span>
<span style="left:870.2px;top:113.5px;font-size:12px;color:#000;transform:scaleX(0.899);">1</span>
<span style="left:920.2px;top:113.5px;font-size:12px;color:#000;transform:scaleX(0.899);">0</span>
<span style="left:964.7px;top:113.5px;font-size:12px;color:#000;transform:scaleX(0.942);">RM 2</span>
<span style="left:1050.2px;top:113.5px;font-size:12px;color:#000;transform:scaleX(0.962);">lin Lee</span>
<span style="left:1144.2px;top:113.5px;font-size:12px;color:#000;transform:scaleX(0.929);">DHL@48</span>
<div class="a" style="left:3px;top:153px;width:45px;height:1px;background:#a8a8a8"></div>
<span style="left:17.2px;top:135.5px;font-size:12px;transform:scaleX(0.899);">7</span>
<span style="left:54.7px;top:135.5px;font-size:12px;color:#000;transform:scaleX(0.922);">203-8386624-0822769</span>
<span style="left:178.2px;top:135.5px;font-size:12px;color:#000;transform:scaleX(0.985);">19/11/20...</span>
<span style="left:243.2px;top:135.5px;font-size:12px;color:#000;transform:scaleX(0.985);">20/11/20...</span>
<span style="left:309.2px;top:135.5px;font-size:12px;color:#000;transform:scaleX(0.899);">5010576569394</span>
<span style="left:398.7px;top:135.5px;font-size:12px;color:#000;transform:scaleX(0.903);">TMS569394</span>
<span style="left:468.0px;top:135.5px;font-size:12px;color:#000;transform:scaleX(0.949);">Thermos CoolKidz Steel Food Jar Blue ...</span>
<span style="left:701.2px;top:135.5px;font-size:12px;color:#000;transform:scaleX(0.899);">1</span>
<span style="left:741.2px;top:135.5px;font-size:12px;color:#000;transform:scaleX(0.899);">1</span>
<span style="left:779.2px;top:135.5px;font-size:12px;color:#000;transform:scaleX(0.899);">0</span>
<span style="left:822.2px;top:135.5px;font-size:12px;color:#000;transform:scaleX(0.899);">0</span>
<span style="left:870.2px;top:135.5px;font-size:12px;color:#000;transform:scaleX(0.899);">0</span>
<span style="left:920.2px;top:135.5px;font-size:12px;color:#000;transform:scaleX(0.899);">0</span>
<span style="left:964.7px;top:135.5px;font-size:12px;color:#000;transform:scaleX(0.942);">RM 2</span>
<span style="left:1029.2px;top:135.5px;font-size:12px;color:#000;transform:scaleX(0.974);">Dominic Glanz</span>
<span style="left:1153.7px;top:135.5px;font-size:12px;color:#000;transform:scaleX(0.942);">RM 2</span>
<div class="a" style="left:49px;top:154px;width:1202px;height:22px;background:#edf5fc"></div>
<div class="a" style="left:3px;top:175px;width:45px;height:1px;background:#a8a8a8"></div>
<span style="left:17.2px;top:157.5px;font-size:12px;transform:scaleX(0.899);">8</span>
<span style="left:54.7px;top:157.5px;font-size:12px;color:#000;transform:scaleX(0.922);">203-8063054-5822765</span>
<span style="left:178.2px;top:157.5px;font-size:12px;color:#000;transform:scaleX(0.970);">12/07/20...</span>
<span style="left:243.2px;top:157.5px;font-size:12px;color:#000;transform:scaleX(0.970);">12/07/20...</span>
<span style="left:309.2px;top:157.5px;font-size:12px;color:#000;transform:scaleX(0.899);">5034636000023</span>
<span style="left:397.2px;top:157.5px;font-size:12px;color:#000;transform:scaleX(0.926);">WAX000023</span>
<span style="left:468.0px;top:157.5px;font-size:12px;color:#000;transform:scaleX(0.983);">Cambridge Traditional Products 10oz. ...</span>
<span style="left:701.2px;top:157.5px;font-size:12px;color:#000;transform:scaleX(0.899);">1</span>
<span style="left:741.2px;top:157.5px;font-size:12px;color:#000;transform:scaleX(0.899);">1</span>
<span style="left:779.2px;top:157.5px;font-size:12px;color:#000;transform:scaleX(0.899);">0</span>
<span style="left:822.2px;top:157.5px;font-size:12px;color:#000;transform:scaleX(0.899);">0</span>
<span style="left:870.2px;top:157.5px;font-size:12px;color:#000;transform:scaleX(0.899);">0</span>
<span style="left:920.2px;top:157.5px;font-size:12px;color:#000;transform:scaleX(0.899);">0</span>
<span style="left:964.7px;top:157.5px;font-size:12px;color:#000;transform:scaleX(0.942);">RM 2</span>
<span style="left:1026.7px;top:157.5px;font-size:12px;color:#000;transform:scaleX(0.942);">Beatrice Farmer</span>
<span style="left:1153.7px;top:157.5px;font-size:12px;color:#000;transform:scaleX(0.942);">RM 2</span>
<div class="a" style="left:3px;top:197px;width:45px;height:1px;background:#a8a8a8"></div>
<span style="left:17.2px;top:179.5px;font-size:12px;transform:scaleX(0.899);">9</span>
<span style="left:54.7px;top:179.5px;font-size:12px;color:#000;transform:scaleX(0.922);">203-8024196-5722764</span>
<span style="left:178.2px;top:179.5px;font-size:12px;color:#000;transform:scaleX(0.970);">15/04/20...</span>
<span style="left:243.2px;top:179.5px;font-size:12px;color:#000;transform:scaleX(0.970);">16/04/20...</span>
<span style="left:309.2px;top:179.5px;font-size:12px;color:#000;transform:scaleX(0.899);">5000239050451</span>
<span style="left:397.2px;top:179.5px;font-size:12px;color:#000;transform:scaleX(0.929);">ARM050451</span>
<span style="left:468.0px;top:179.5px;font-size:12px;color:#000;transform:scaleX(0.976);">Goodboy Chew Twists, 125 x 7-8 mm</span>
<span style="left:701.2px;top:179.5px;font-size:12px;color:#000;transform:scaleX(0.899);">1</span>
<span style="left:741.2px;top:179.5px;font-size:12px;color:#000;transform:scaleX(0.899);">1</span>
<span style="left:779.2px;top:179.5px;font-size:12px;color:#000;transform:scaleX(0.899);">0</span>
<span style="left:822.2px;top:179.5px;font-size:12px;color:#000;transform:scaleX(0.899);">0</span>
<span style="left:870.2px;top:179.5px;font-size:12px;color:#000;transform:scaleX(0.899);">0</span>
<span style="left:920.2px;top:179.5px;font-size:12px;color:#000;transform:scaleX(0.899);">0</span>
<span style="left:964.7px;top:179.5px;font-size:12px;color:#000;transform:scaleX(0.942);">RM 2</span>
<span style="left:1018.2px;top:179.5px;font-size:12px;color:#000;transform:scaleX(1.006);">Nichola McCappin</span>
<span style="left:1153.7px;top:179.5px;font-size:12px;color:#000;transform:scaleX(0.942);">RM 2</span>
<div class="a" style="left:49px;top:198px;width:1202px;height:22px;background:#edf5fc"></div>
<div class="a" style="left:3px;top:219px;width:45px;height:1px;background:#a8a8a8"></div>
<span style="left:17.2px;top:201.5px;font-size:12px;transform:scaleX(0.899);">10</span>
<span style="left:54.7px;top:201.5px;font-size:12px;color:#000;transform:scaleX(0.929);">203-8009511-9022763</span>
<span style="left:178.2px;top:201.5px;font-size:12px;color:#000;transform:scaleX(0.970);">02/03/20...</span>
<span style="left:243.2px;top:201.5px;font-size:12px;color:#000;transform:scaleX(0.970);">02/03/20...</span>
<span style="left:309.2px;top:201.5px;font-size:12px;color:#000;transform:scaleX(0.899);">5015972055717</span>
<span style="left:398.2px;top:201.5px;font-size:12px;color:#000;transform:scaleX(0.899);">MER055717</span>
<span style="left:468.0px;top:201.5px;font-size:12px;color:#000;transform:scaleX(0.977);">Keyboard Cleaning Brush</span>
<span style="left:701.2px;top:201.5px;font-size:12px;color:#000;transform:scaleX(0.899);">1</span>
<span style="left:741.2px;top:201.5px;font-size:12px;color:#000;transform:scaleX(0.899);">1</span>
<span style="left:779.2px;top:201.5px;font-size:12px;color:#000;transform:scaleX(0.899);">0</span>
<span style="left:822.2px;top:201.5px;font-size:12px;color:#000;transform:scaleX(0.899);">0</span>
<span style="left:870.2px;top:201.5px;font-size:12px;color:#000;transform:scaleX(0.899);">0</span>
<span style="left:920.2px;top:201.5px;font-size:12px;color:#000;transform:scaleX(0.899);">0</span>
<span style="left:964.7px;top:201.5px;font-size:12px;color:#000;transform:scaleX(0.942);">RM 2</span>
<span style="left:1013.2px;top:201.5px;font-size:12px;color:#000;transform:scaleX(0.958);">Chan Boris Hei Chun</span>
<span style="left:1132.7px;top:201.5px;font-size:12px;color:#000;transform:scaleX(0.916);">FRANKING ...</span>
<div class="a" style="left:3px;top:241px;width:45px;height:1px;background:#a8a8a8"></div>
<span style="left:17.2px;top:223.5px;font-size:12px;transform:scaleX(0.963);">11</span>
<span style="left:54.7px;top:223.5px;font-size:12px;color:#000;transform:scaleX(0.922);">203-7952109-7022769</span>
<span style="left:178.2px;top:223.5px;font-size:12px;color:#000;transform:scaleX(0.985);">12/11/20...</span>
<span style="left:243.2px;top:223.5px;font-size:12px;color:#000;transform:scaleX(0.985);">13/11/20...</span>
<span style="left:309.2px;top:223.5px;font-size:12px;color:#000;transform:scaleX(0.899);">5014353087859</span>
<span style="left:402.2px;top:223.5px;font-size:12px;color:#000;transform:scaleX(0.896);">KIL087859</span>
<span style="left:468.0px;top:223.5px;font-size:12px;color:#000;transform:scaleX(0.969);">Kilrock-K Descaler 250ml</span>
<span style="left:701.2px;top:223.5px;font-size:12px;color:#000;transform:scaleX(0.899);">1</span>
<span style="left:741.2px;top:223.5px;font-size:12px;color:#000;transform:scaleX(0.899);">1</span>
<span style="left:779.2px;top:223.5px;font-size:12px;color:#000;transform:scaleX(0.899);">0</span>
<span style="left:822.2px;top:223.5px;font-size:12px;color:#000;transform:scaleX(0.899);">0</span>
<span style="left:870.2px;top:223.5px;font-size:12px;color:#000;transform:scaleX(0.899);">0</span>
<span style="left:920.2px;top:223.5px;font-size:12px;color:#000;transform:scaleX(0.899);">0</span>
<span style="left:964.7px;top:223.5px;font-size:12px;color:#000;transform:scaleX(0.942);">RM 2</span>
<span style="left:1023.2px;top:223.5px;font-size:12px;color:#000;">Chris Monument</span>
<span style="left:1153.7px;top:223.5px;font-size:12px;color:#000;transform:scaleX(0.942);">RM 2</span>
<div class="a" style="left:49px;top:242px;width:1202px;height:22px;background:#edf5fc"></div>
<div class="a" style="left:3px;top:263px;width:45px;height:1px;background:#a8a8a8"></div>
<span style="left:17.2px;top:245.5px;font-size:12px;transform:scaleX(0.899);">12</span>
<span style="left:54.7px;top:245.5px;font-size:12px;color:#d62a2a;transform:scaleX(0.922);">203-7749536-0322762</span>
<span style="left:178.2px;top:245.5px;font-size:12px;color:#d62a2a;transform:scaleX(0.970);">04/10/20...</span>
<span style="left:243.2px;top:245.5px;font-size:12px;color:#d62a2a;transform:scaleX(0.970);">05/10/20...</span>
<span style="left:309.2px;top:245.5px;font-size:12px;color:#d62a2a;transform:scaleX(0.899);">5010368066261</span>
<span style="left:399.2px;top:245.5px;font-size:12px;color:#d62a2a;transform:scaleX(0.887);">CUP066261</span>
<span style="left:468.0px;top:245.5px;font-size:12px;color:#d62a2a;transform:scaleX(0.973);">Garden Heritage Shades 1lt Wild Thyme</span>
<span style="left:701.2px;top:245.5px;font-size:12px;color:#d62a2a;transform:scaleX(0.899);">1</span>
<span style="left:741.2px;top:245.5px;font-size:12px;color:#d62a2a;transform:scaleX(0.899);">1</span>
<span style="left:779.2px;top:245.5px;font-size:12px;color:#d62a2a;transform:scaleX(0.899);">0</span>
<span style="left:822.2px;top:245.5px;font-size:12px;color:#d62a2a;transform:scaleX(0.899);">0</span>
<span style="left:870.2px;top:245.5px;font-size:12px;color:#d62a2a;transform:scaleX(0.899);">0</span>
<span style="left:920.2px;top:245.5px;font-size:12px;color:#d62a2a;transform:scaleX(0.899);">0</span>
<span style="left:964.7px;top:245.5px;font-size:12px;color:#d62a2a;transform:scaleX(0.942);">RM 2</span>
<span style="left:1027.7px;top:245.5px;font-size:12px;color:#d62a2a;transform:scaleX(1.012);">Anthony Smith</span>
<span style="left:1153.7px;top:245.5px;font-size:12px;color:#d62a2a;transform:scaleX(0.942);">RM 2</span>
<div class="a" style="left:3px;top:285px;width:45px;height:1px;background:#a8a8a8"></div>
<span style="left:17.2px;top:267.5px;font-size:12px;transform:scaleX(0.899);">13</span>
<span style="left:54.7px;top:267.5px;font-size:12px;color:#d62a2a;transform:scaleX(0.922);">203-7749536-0322762</span>
<span style="left:178.2px;top:267.5px;font-size:12px;color:#d62a2a;transform:scaleX(0.970);">04/10/20...</span>
<span style="left:243.2px;top:267.5px;font-size:12px;color:#d62a2a;transform:scaleX(0.970);">05/10/20...</span>
<span style="left:309.2px;top:267.5px;font-size:12px;color:#d62a2a;transform:scaleX(0.899);">5010368066469</span>
<span style="left:399.2px;top:267.5px;font-size:12px;color:#d62a2a;transform:scaleX(0.887);">CUP066469</span>
<span style="left:468.0px;top:267.5px;font-size:12px;color:#d62a2a;transform:scaleX(0.972);">Garden Heritage Shades 1lt Topiary Gr...</span>
<span style="left:701.2px;top:267.5px;font-size:12px;color:#d62a2a;transform:scaleX(0.899);">1</span>
<span style="left:741.2px;top:267.5px;font-size:12px;color:#d62a2a;transform:scaleX(0.899);">1</span>
<span style="left:779.2px;top:267.5px;font-size:12px;color:#d62a2a;transform:scaleX(0.899);">0</span>
<span style="left:822.2px;top:267.5px;font-size:12px;color:#d62a2a;transform:scaleX(0.899);">0</span>
<span style="left:870.2px;top:267.5px;font-size:12px;color:#d62a2a;transform:scaleX(0.899);">0</span>
<span style="left:920.2px;top:267.5px;font-size:12px;color:#d62a2a;transform:scaleX(0.899);">0</span>
<span style="left:964.7px;top:267.5px;font-size:12px;color:#d62a2a;transform:scaleX(0.942);">RM 2</span>
<span style="left:1027.7px;top:267.5px;font-size:12px;color:#d62a2a;transform:scaleX(1.012);">Anthony Smith</span>
<span style="left:1153.7px;top:267.5px;font-size:12px;color:#d62a2a;transform:scaleX(0.942);">RM 2</span>
<div class="a" style="left:49px;top:286px;width:1202px;height:22px;background:#edf5fc"></div>
<div class="a" style="left:3px;top:307px;width:45px;height:1px;background:#a8a8a8"></div>
<span style="left:17.2px;top:289.5px;font-size:12px;transform:scaleX(0.899);">14</span>
<span style="left:54.7px;top:289.5px;font-size:12px;color:#000;transform:scaleX(0.929);">203-7712276-3861130</span>
<span style="left:178.2px;top:289.5px;font-size:12px;color:#000;transform:scaleX(0.970);">10/08/20...</span>
<span style="left:243.2px;top:289.5px;font-size:12px;color:#000;transform:scaleX(0.970);">12/08/20...</span>
<span style="left:309.2px;top:289.5px;font-size:12px;color:#000;transform:scaleX(0.899);">5031470031534</span>
<span style="left:397.2px;top:289.5px;font-size:12px;color:#000;transform:scaleX(0.911);">WBD031534</span>
<span style="left:468.0px;top:289.5px;font-size:12px;color:#000;transform:scaleX(0.945);">Wilton Bradley BGG1057 3 PACK SHUT...</span>
<span style="left:701.2px;top:289.5px;font-size:12px;color:#000;transform:scaleX(0.899);">1</span>
<span style="left:741.2px;top:289.5px;font-size:12px;color:#000;transform:scaleX(0.899);">1</span>
<span style="left:779.2px;top:289.5px;font-size:12px;color:#000;transform:scaleX(0.899);">0</span>
<span style="left:822.2px;top:289.5px;font-size:12px;color:#000;transform:scaleX(0.899);">0</span>
<span style="left:870.2px;top:289.5px;font-size:12px;color:#000;transform:scaleX(0.899);">0</span>
<span style="left:920.2px;top:289.5px;font-size:12px;color:#000;transform:scaleX(0.899);">0</span>
<span style="left:964.7px;top:289.5px;font-size:12px;color:#000;transform:scaleX(0.942);">RM 2</span>
<span style="left:1029.7px;top:289.5px;font-size:12px;color:#000;transform:scaleX(1.007);">Emma Moffatt</span>
<span style="left:1153.7px;top:289.5px;font-size:12px;color:#000;transform:scaleX(0.942);">RM 2</span>
<div class="a" style="left:3px;top:329px;width:45px;height:1px;background:#a8a8a8"></div>
<span style="left:17.2px;top:311.5px;font-size:12px;transform:scaleX(0.899);">15</span>
<span style="left:54.7px;top:311.5px;font-size:12px;color:#000;transform:scaleX(0.922);">203-6863009-2722767</span>
<span style="left:178.2px;top:311.5px;font-size:12px;color:#000;transform:scaleX(0.970);">27/09/20...</span>
<span style="left:243.2px;top:311.5px;font-size:12px;color:#000;transform:scaleX(0.970);">27/09/20...</span>
<span style="left:309.2px;top:311.5px;font-size:12px;color:#000;transform:scaleX(0.899);">8901427000098</span>
<span style="left:401.7px;top:311.5px;font-size:12px;color:#000;transform:scaleX(0.883);">VIR000098</span>
<span style="left:468.0px;top:311.5px;font-size:12px;color:#000;transform:scaleX(0.966);">Pack of 3 Sunpet Large Red Top Plasti...</span>
<span style="left:701.2px;top:311.5px;font-size:12px;color:#000;transform:scaleX(0.899);">1</span>
<span style="left:741.2px;top:311.5px;font-size:12px;color:#000;transform:scaleX(0.899);">1</span>
<span style="left:779.2px;top:311.5px;font-size:12px;color:#000;transform:scaleX(0.899);">0</span>
<span style="left:822.2px;top:311.5px;font-size:12px;color:#000;transform:scaleX(0.899);">0</span>
<span style="left:870.2px;top:311.5px;font-size:12px;color:#000;transform:scaleX(0.899);">0</span>
<span style="left:920.2px;top:311.5px;font-size:12px;color:#000;transform:scaleX(0.899);">0</span>
<span style="left:964.7px;top:311.5px;font-size:12px;color:#000;transform:scaleX(0.942);">RM 2</span>
<span style="left:1026.7px;top:311.5px;font-size:12px;color:#000;transform:scaleX(0.964);">Damian Cooper</span>
<span style="left:1153.7px;top:311.5px;font-size:12px;color:#000;transform:scaleX(0.942);">RM 2</span>
<div class="a" style="left:49px;top:330px;width:1202px;height:22px;background:#edf5fc"></div>
<div class="a" style="left:3px;top:351px;width:45px;height:1px;background:#a8a8a8"></div>
<span style="left:17.2px;top:333.5px;font-size:12px;transform:scaleX(0.899);">16</span>
<span style="left:54.7px;top:333.5px;font-size:12px;color:#000;transform:scaleX(0.922);">203-5992222-2222767</span>
<span style="left:178.2px;top:333.5px;font-size:12px;color:#000;transform:scaleX(0.970);">10/01/20...</span>
<span style="left:243.2px;top:333.5px;font-size:12px;color:#000;transform:scaleX(0.970);">10/01/20...</span>
<span style="left:309.2px;top:333.5px;font-size:12px;color:#000;transform:scaleX(0.899);">5012075720023</span>
<span style="left:399.7px;top:333.5px;font-size:12px;color:#000;transform:scaleX(0.899);">LUY720023</span>
<span style="left:468.0px;top:333.5px;font-size:12px;color:#000;transform:scaleX(1.005);">Toilet Brush and Holder White.</span>
<span style="left:701.2px;top:333.5px;font-size:12px;color:#000;transform:scaleX(0.899);">1</span>
<span style="left:741.2px;top:333.5px;font-size:12px;color:#000;transform:scaleX(0.899);">1</span>
<span style="left:779.2px;top:333.5px;font-size:12px;color:#000;transform:scaleX(0.899);">0</span>
<span style="left:822.2px;top:333.5px;font-size:12px;color:#000;transform:scaleX(0.899);">0</span>
<span style="left:870.2px;top:333.5px;font-size:12px;color:#000;transform:scaleX(0.899);">0</span>
<span style="left:920.2px;top:333.5px;font-size:12px;color:#000;transform:scaleX(0.899);">0</span>
<span style="left:964.7px;top:333.5px;font-size:12px;color:#000;transform:scaleX(0.942);">RM 2</span>
<span style="left:1017.7px;top:333.5px;font-size:12px;color:#000;transform:scaleX(0.983);">Josephine Maydon</span>
<span style="left:1153.7px;top:333.5px;font-size:12px;color:#000;transform:scaleX(0.942);">RM 2</span>
<div class="a" style="left:3px;top:373px;width:45px;height:1px;background:#a8a8a8"></div>
<span style="left:17.2px;top:355.5px;font-size:12px;transform:scaleX(0.899);">17</span>
<span style="left:54.7px;top:355.5px;font-size:12px;color:#000;transform:scaleX(0.922);">203-5819689-9222767</span>
<span style="left:178.2px;top:355.5px;font-size:12px;color:#000;transform:scaleX(0.970);">14/09/20...</span>
<span style="left:243.2px;top:355.5px;font-size:12px;color:#000;transform:scaleX(0.970);">14/09/20...</span>
<span style="left:309.2px;top:355.5px;font-size:12px;color:#000;transform:scaleX(0.899);">9414202016454</span>
<span style="left:398.7px;top:355.5px;font-size:12px;color:#000;transform:scaleX(0.903);">STM016454</span>
<span style="left:468.0px;top:355.5px;font-size:12px;color:#000;transform:scaleX(0.962);">Sistema, 450ml Sandwich Box</span>
<span style="left:701.2px;top:355.5px;font-size:12px;color:#000;transform:scaleX(0.899);">1</span>
<span style="left:741.2px;top:355.5px;font-size:12px;color:#000;transform:scaleX(0.899);">1</span>
<span style="left:779.2px;top:355.5px;font-size:12px;color:#000;transform:scaleX(0.899);">0</span>
<span style="left:822.2px;top:355.5px;font-size:12px;color:#000;transform:scaleX(0.899);">0</span>
<span style="left:870.2px;top:355.5px;font-size:12px;color:#000;transform:scaleX(0.899);">0</span>
<span style="left:920.2px;top:355.5px;font-size:12px;color:#000;transform:scaleX(0.899);">0</span>
<span style="left:964.7px;top:355.5px;font-size:12px;color:#000;transform:scaleX(0.942);">RM 2</span>
<span style="left:1027.7px;top:355.5px;font-size:12px;color:#000;transform:scaleX(0.971);">Pam Goldspink</span>
<span style="left:1153.7px;top:355.5px;font-size:12px;color:#000;transform:scaleX(0.942);">RM 2</span>
<div class="a" style="left:49px;top:374px;width:1202px;height:22px;background:#edf5fc"></div>
<div class="a" style="left:3px;top:395px;width:45px;height:1px;background:#a8a8a8"></div>
<span style="left:17.2px;top:377.5px;font-size:12px;transform:scaleX(0.899);">18</span>
<span style="left:54.7px;top:377.5px;font-size:12px;color:#000;transform:scaleX(0.922);">203-5801813-6022767</span>
<span style="left:178.2px;top:377.5px;font-size:12px;color:#000;transform:scaleX(0.970);">10/12/20...</span>
<span style="left:243.2px;top:377.5px;font-size:12px;color:#000;transform:scaleX(0.985);">11/12/20...</span>
<span style="left:309.2px;top:377.5px;font-size:12px;color:#000;transform:scaleX(0.899);">5010576833433</span>
<span style="left:399.2px;top:377.5px;font-size:12px;color:#000;transform:scaleX(0.915);">BHL833433</span>
<span style="left:468.0px;top:377.5px;font-size:12px;color:#000;transform:scaleX(0.949);">Thermos Thermocafe 2060 Steel Trave...</span>
<span style="left:701.2px;top:377.5px;font-size:12px;color:#000;transform:scaleX(0.899);">1</span>
<span style="left:741.2px;top:377.5px;font-size:12px;color:#000;transform:scaleX(0.899);">1</span>
<span style="left:779.2px;top:377.5px;font-size:12px;color:#000;transform:scaleX(0.899);">0</span>
<span style="left:822.2px;top:377.5px;font-size:12px;color:#000;transform:scaleX(0.899);">0</span>
<span style="left:870.2px;top:377.5px;font-size:12px;color:#000;transform:scaleX(0.899);">0</span>
<span style="left:920.2px;top:377.5px;font-size:12px;color:#000;transform:scaleX(0.899);">0</span>
<span style="left:964.7px;top:377.5px;font-size:12px;color:#000;transform:scaleX(0.942);">RM 2</span>
<span style="left:1011.7px;top:377.5px;font-size:12px;color:#000;">Mr Richard Metherell</span>
<span style="left:1153.7px;top:377.5px;font-size:12px;color:#000;transform:scaleX(0.942);">RM 2</span>
<div class="a" style="left:3px;top:417px;width:45px;height:1px;background:#a8a8a8"></div>
<span style="left:17.2px;top:399.5px;font-size:12px;transform:scaleX(0.899);">19</span>
<span style="left:54.7px;top:399.5px;font-size:12px;color:#000;transform:scaleX(0.922);">203-5382852-3822764</span>
<span style="left:178.2px;top:399.5px;font-size:12px;color:#000;transform:scaleX(0.970);">06/02/20...</span>
<span style="left:243.2px;top:399.5px;font-size:12px;color:#000;transform:scaleX(0.970);">07/02/20...</span>
<span style="left:309.2px;top:399.5px;font-size:12px;color:#000;transform:scaleX(0.899);">5017403331247</span>
<span style="left:400.7px;top:399.5px;font-size:12px;color:#000;transform:scaleX(0.877);">BLS331247</span>
<span style="left:468.0px;top:399.5px;font-size:12px;color:#000;transform:scaleX(1.005);">Jumbo Magnifier / Magnifying Glass, ...</span>
<span style="left:701.2px;top:399.5px;font-size:12px;color:#000;transform:scaleX(0.899);">1</span>
<span style="left:741.2px;top:399.5px;font-size:12px;color:#000;transform:scaleX(0.899);">1</span>
<span style="left:779.2px;top:399.5px;font-size:12px;color:#000;transform:scaleX(0.899);">0</span>
<span style="left:822.2px;top:399.5px;font-size:12px;color:#000;transform:scaleX(0.899);">0</span>
<span style="left:870.2px;top:399.5px;font-size:12px;color:#000;transform:scaleX(0.899);">0</span>
<span style="left:920.2px;top:399.5px;font-size:12px;color:#000;transform:scaleX(0.899);">0</span>
<span style="left:964.7px;top:399.5px;font-size:12px;color:#000;transform:scaleX(0.942);">RM 2</span>
<span style="left:1035.7px;top:399.5px;font-size:12px;color:#000;transform:scaleX(0.964);">Paul Bryden</span>
<span style="left:1132.7px;top:399.5px;font-size:12px;color:#000;transform:scaleX(0.916);">FRANKING ...</span>
<div class="a" style="left:49px;top:418px;width:1202px;height:22px;background:#edf5fc"></div>
<div class="a" style="left:3px;top:439px;width:45px;height:1px;background:#a8a8a8"></div>
<span style="left:17.2px;top:421.5px;font-size:12px;transform:scaleX(0.899);">20</span>
<span style="left:54.7px;top:421.5px;font-size:12px;color:#d62a2a;transform:scaleX(0.922);">203-5074822-3122761</span>
<span style="left:178.2px;top:421.5px;font-size:12px;color:#d62a2a;transform:scaleX(0.970);">09/03/20...</span>
<span style="left:243.2px;top:421.5px;font-size:12px;color:#d62a2a;transform:scaleX(0.985);">11/03/20...</span>
<span style="left:309.2px;top:421.5px;font-size:12px;color:#d62a2a;transform:scaleX(0.899);">5017403851547</span>
<span style="left:400.7px;top:421.5px;font-size:12px;color:#d62a2a;transform:scaleX(0.877);">BLS851547</span>
<span style="left:468.0px;top:421.5px;font-size:12px;color:#d62a2a;transform:scaleX(0.991);">5 Hook Hat and Coat Rack - Mahogan...</span>
<span style="left:701.2px;top:421.5px;font-size:12px;color:#d62a2a;transform:scaleX(0.899);">1</span>
<span style="left:741.2px;top:421.5px;font-size:12px;color:#d62a2a;transform:scaleX(0.899);">1</span>
<span style="left:779.2px;top:421.5px;font-size:12px;color:#d62a2a;transform:scaleX(0.899);">0</span>
<span style="left:822.2px;top:421.5px;font-size:12px;color:#d62a2a;transform:scaleX(0.899);">0</span>
<span style="left:870.2px;top:421.5px;font-size:12px;color:#d62a2a;transform:scaleX(0.899);">0</span>
<span style="left:920.2px;top:421.5px;font-size:12px;color:#d62a2a;transform:scaleX(0.899);">0</span>
<span style="left:964.7px;top:421.5px;font-size:12px;color:#d62a2a;transform:scaleX(0.942);">RM 2</span>
<span style="left:1029.7px;top:421.5px;font-size:12px;color:#d62a2a;">edward bullen</span>
<span style="left:1153.7px;top:421.5px;font-size:12px;color:#d62a2a;transform:scaleX(0.942);">RM 2</span>
<div class="a" style="left:3px;top:461px;width:45px;height:1px;background:#a8a8a8"></div>
<span style="left:17.2px;top:443.5px;font-size:12px;transform:scaleX(0.899);">21</span>
<span style="left:54.7px;top:443.5px;font-size:12px;color:#d62a2a;transform:scaleX(0.922);">203-5074822-3122761</span>
<span style="left:178.2px;top:443.5px;font-size:12px;color:#d62a2a;transform:scaleX(0.970);">09/03/20...</span>
<span style="left:243.2px;top:443.5px;font-size:12px;color:#d62a2a;transform:scaleX(0.985);">11/03/20...</span>
<span style="left:309.2px;top:443.5px;font-size:12px;color:#d62a2a;transform:scaleX(0.899);">5010383341657</span>
<span style="left:399.2px;top:443.5px;font-size:12px;color:#d62a2a;transform:scaleX(0.915);">HKL341657</span>
<span style="left:468.0px;top:443.5px;font-size:12px;color:#d62a2a;transform:scaleX(0.996);">UniBond No More Nails Interior Grab ...</span>
<span style="left:701.2px;top:443.5px;font-size:12px;color:#d62a2a;transform:scaleX(0.899);">1</span>
<span style="left:741.2px;top:443.5px;font-size:12px;color:#d62a2a;transform:scaleX(0.899);">1</span>
<span style="left:779.2px;top:443.5px;font-size:12px;color:#d62a2a;transform:scaleX(0.899);">0</span>
<span style="left:822.2px;top:443.5px;font-size:12px;color:#d62a2a;transform:scaleX(0.899);">0</span>
<span style="left:870.2px;top:443.5px;font-size:12px;color:#d62a2a;transform:scaleX(0.899);">0</span>
<span style="left:920.2px;top:443.5px;font-size:12px;color:#d62a2a;transform:scaleX(0.899);">0</span>
<span style="left:964.7px;top:443.5px;font-size:12px;color:#d62a2a;transform:scaleX(0.942);">RM 2</span>
<span style="left:1029.7px;top:443.5px;font-size:12px;color:#d62a2a;">edward bullen</span>
<span style="left:1153.7px;top:443.5px;font-size:12px;color:#d62a2a;transform:scaleX(0.942);">RM 2</span>
<div class="a" style="left:49px;top:462px;width:1202px;height:22px;background:#edf5fc"></div>
<div class="a" style="left:3px;top:483px;width:45px;height:1px;background:#a8a8a8"></div>
<span style="left:17.2px;top:465.5px;font-size:12px;transform:scaleX(0.899);">22</span>
<span style="left:54.7px;top:465.5px;font-size:12px;color:#000;transform:scaleX(0.922);">203-4922765-4209143</span>
<span style="left:178.2px;top:465.5px;font-size:12px;color:#000;transform:scaleX(0.970);">23/05/20...</span>
<span style="left:243.2px;top:465.5px;font-size:12px;color:#000;transform:scaleX(0.970);">23/05/20...</span>
<span style="left:309.2px;top:465.5px;font-size:12px;color:#000;transform:scaleX(0.899);">5010646035699</span>
<span style="left:399.2px;top:465.5px;font-size:12px;color:#000;transform:scaleX(0.925);">HZL035699</span>
<span style="left:468.0px;top:465.5px;font-size:12px;color:#000;transform:scaleX(0.949);">Hozelock Cascade 1500</span>
<span style="left:701.2px;top:465.5px;font-size:12px;color:#000;transform:scaleX(0.899);">1</span>
<span style="left:741.2px;top:465.5px;font-size:12px;color:#000;transform:scaleX(0.899);">1</span>
<span style="left:779.2px;top:465.5px;font-size:12px;color:#000;transform:scaleX(0.899);">0</span>
<span style="left:822.2px;top:465.5px;font-size:12px;color:#000;transform:scaleX(0.899);">0</span>
<span style="left:870.2px;top:465.5px;font-size:12px;color:#000;transform:scaleX(0.899);">0</span>
<span style="left:920.2px;top:465.5px;font-size:12px;color:#000;transform:scaleX(0.899);">0</span>
<span style="left:964.7px;top:465.5px;font-size:12px;color:#000;transform:scaleX(0.942);">RM 2</span>
<span style="left:1025.7px;top:465.5px;font-size:12px;color:#000;transform:scaleX(0.965);">Raymond Stone</span>
<span style="left:1153.7px;top:465.5px;font-size:12px;color:#000;transform:scaleX(0.942);">RM 2</span>
<div class="a" style="left:3px;top:505px;width:45px;height:1px;background:#a8a8a8"></div>
<span style="left:17.2px;top:487.5px;font-size:12px;transform:scaleX(0.899);">23</span>
<span style="left:54.7px;top:487.5px;font-size:12px;color:#000;transform:scaleX(0.922);">203-4722555-1322760</span>
<span style="left:178.2px;top:487.5px;font-size:12px;color:#000;transform:scaleX(0.970);">21/10/20...</span>
<span style="left:243.2px;top:487.5px;font-size:12px;color:#000;transform:scaleX(0.970);">23/10/20...</span>
<span style="left:309.2px;top:487.5px;font-size:12px;color:#000;transform:scaleX(0.908);">5051126260262</span>
<span style="left:399.7px;top:487.5px;font-size:12px;color:#000;transform:scaleX(0.881);">PUS071948</span>
<span style="left:468.0px;top:487.5px;font-size:12px;color:#000;transform:scaleX(0.991);">Lichfield Nylon Spreader Black</span>
<span style="left:701.2px;top:487.5px;font-size:12px;color:#000;transform:scaleX(0.899);">2</span>
<span style="left:741.2px;top:487.5px;font-size:12px;color:#000;transform:scaleX(0.899);">2</span>
<span style="left:779.2px;top:487.5px;font-size:12px;color:#000;transform:scaleX(0.899);">0</span>
<span style="left:822.2px;top:487.5px;font-size:12px;color:#000;transform:scaleX(0.899);">0</span>
<span style="left:870.2px;top:487.5px;font-size:12px;color:#000;transform:scaleX(0.899);">0</span>
<span style="left:920.2px;top:487.5px;font-size:12px;color:#000;transform:scaleX(0.899);">0</span>
<span style="left:964.7px;top:487.5px;font-size:12px;color:#000;transform:scaleX(0.942);">RM 2</span>
<span style="left:1017.7px;top:487.5px;font-size:12px;color:#000;transform:scaleX(0.990);">Mrs Judith Nanson</span>
<span style="left:1153.7px;top:487.5px;font-size:12px;color:#000;transform:scaleX(0.942);">RM 2</span>
<div class="a" style="left:49px;top:506px;width:1202px;height:22px;background:#edf5fc"></div>
<div class="a" style="left:3px;top:527px;width:45px;height:1px;background:#a8a8a8"></div>
<span style="left:17.2px;top:509.5px;font-size:12px;transform:scaleX(0.899);">24</span>
<span style="left:54.7px;top:509.5px;font-size:12px;color:#000;transform:scaleX(0.922);">203-4660237-9122762</span>
<span style="left:178.2px;top:509.5px;font-size:12px;color:#000;transform:scaleX(0.970);">20/06/20...</span>
<span style="left:243.2px;top:509.5px;font-size:12px;color:#000;transform:scaleX(0.970);">21/06/20...</span>
<span style="left:309.2px;top:509.5px;font-size:12px;color:#000;transform:scaleX(0.899);">3253560306564</span>
<span style="left:400.7px;top:509.5px;font-size:12px;color:#000;transform:scaleX(0.868);">STY306564</span>
<span style="left:468.0px;top:509.5px;font-size:12px;color:#000;transform:scaleX(0.977);">Stanley Pocket Tape 8M/26FT 25MM ...</span>
<span style="left:701.2px;top:509.5px;font-size:12px;color:#000;transform:scaleX(0.899);">1</span>
<span style="left:741.2px;top:509.5px;font-size:12px;color:#000;transform:scaleX(0.899);">1</span>
<span style="left:779.2px;top:509.5px;font-size:12px;color:#000;transform:scaleX(0.899);">0</span>
<span style="left:822.2px;top:509.5px;font-size:12px;color:#000;transform:scaleX(0.899);">0</span>
<span style="left:870.2px;top:509.5px;font-size:12px;color:#000;transform:scaleX(0.899);">0</span>
<span style="left:920.2px;top:509.5px;font-size:12px;color:#000;transform:scaleX(0.899);">0</span>
<span style="left:964.7px;top:509.5px;font-size:12px;color:#000;transform:scaleX(0.942);">RM 2</span>
<span style="left:1041.7px;top:509.5px;font-size:12px;color:#000;transform:scaleX(0.968);">Nick Gray</span>
<span style="left:1132.7px;top:509.5px;font-size:12px;color:#000;transform:scaleX(0.916);">FRANKING ...</span>
<div class="a" style="left:3px;top:549px;width:45px;height:1px;background:#a8a8a8"></div>
<span style="left:17.2px;top:531.5px;font-size:12px;transform:scaleX(0.899);">25</span>
<span style="left:54.7px;top:531.5px;font-size:12px;color:#000;transform:scaleX(0.922);">203-4594288-7222760</span>
<span style="left:178.2px;top:531.5px;font-size:12px;color:#000;transform:scaleX(0.970);">05/10/20...</span>
<span style="left:243.2px;top:531.5px;font-size:12px;color:#000;transform:scaleX(0.970);">06/10/20...</span>
<span style="left:309.2px;top:531.5px;font-size:12px;color:#000;transform:scaleX(0.899);">5016447100109</span>
<span style="left:398.7px;top:531.5px;font-size:12px;color:#000;transform:scaleX(0.885);">WEF100109</span>
<span style="left:468.0px;top:531.5px;font-size:12px;color:#000;transform:scaleX(0.976);">Whitefurze White 42cm Grecian Urn G...</span>
<span style="left:701.2px;top:531.5px;font-size:12px;color:#000;transform:scaleX(0.899);">2</span>
<span style="left:741.2px;top:531.5px;font-size:12px;color:#000;transform:scaleX(0.899);">2</span>
<span style="left:779.2px;top:531.5px;font-size:12px;color:#000;transform:scaleX(0.899);">0</span>
<span style="left:822.2px;top:531.5px;font-size:12px;color:#000;transform:scaleX(0.899);">0</span>
<span style="left:870.2px;top:531.5px;font-size:12px;color:#000;transform:scaleX(0.899);">0</span>
<span style="left:920.2px;top:531.5px;font-size:12px;color:#000;transform:scaleX(0.899);">0</span>
<span style="left:964.7px;top:531.5px;font-size:12px;color:#000;transform:scaleX(0.942);">RM 2</span>
<span style="left:1028.2px;top:531.5px;font-size:12px;color:#000;transform:scaleX(0.936);">Mrs Jane Patey</span>
<span style="left:1153.7px;top:531.5px;font-size:12px;color:#000;transform:scaleX(0.942);">RM 2</span>
<div class="a" style="left:174px;top:0;width:1px;height:540px;background:rgba(190,205,225,.35)"></div>
<div class="a" style="left:239px;top:0;width:1px;height:540px;background:rgba(190,205,225,.35)"></div>
<div class="a" style="left:304px;top:0;width:1px;height:540px;background:rgba(190,205,225,.35)"></div>
<div class="a" style="left:394px;top:0;width:1px;height:540px;background:rgba(190,205,225,.35)"></div>
<div class="a" style="left:464px;top:0;width:1px;height:540px;background:rgba(190,205,225,.35)"></div>
<div class="a" style="left:684px;top:0;width:1px;height:540px;background:rgba(190,205,225,.35)"></div>
<div class="a" style="left:726px;top:0;width:1px;height:540px;background:rgba(190,205,225,.35)"></div>
<div class="a" style="left:764px;top:0;width:1px;height:540px;background:rgba(190,205,225,.35)"></div>
<div class="a" style="left:802px;top:0;width:1px;height:540px;background:rgba(190,205,225,.35)"></div>
<div class="a" style="left:850px;top:0;width:1px;height:540px;background:rgba(190,205,225,.35)"></div>
<div class="a" style="left:898px;top:0;width:1px;height:540px;background:rgba(190,205,225,.35)"></div>
<div class="a" style="left:950px;top:0;width:1px;height:540px;background:rgba(190,205,225,.35)"></div>
<div class="a" style="left:1008px;top:0;width:1px;height:540px;background:rgba(190,205,225,.35)"></div>
<div class="a" style="left:1128px;top:0;width:1px;height:540px;background:rgba(190,205,225,.35)"></div>
<div class="a" style="left:1208px;top:0;width:1px;height:540px;background:rgba(190,205,225,.35)"></div>
<div class="a" style="left:49px;top:0;width:1px;height:540px;background:#a0a0a0"></div>
<div class="a" style="left:239px;top:0;width:1px;height:21px;background:rgba(255,255,255,.55)"></div>
<div class="a" style="left:304px;top:0;width:1px;height:21px;background:rgba(255,255,255,.55)"></div>
<div class="a" style="left:394px;top:0;width:1px;height:21px;background:rgba(255,255,255,.55)"></div>
<div class="a" style="left:464px;top:0;width:1px;height:21px;background:rgba(255,255,255,.55)"></div>
<div class="a" style="left:684px;top:0;width:1px;height:21px;background:rgba(255,255,255,.55)"></div>
<div class="a" style="left:726px;top:0;width:1px;height:21px;background:rgba(255,255,255,.55)"></div>
<div class="a" style="left:764px;top:0;width:1px;height:21px;background:rgba(255,255,255,.55)"></div>
<div class="a" style="left:802px;top:0;width:1px;height:21px;background:rgba(255,255,255,.55)"></div>
<div class="a" style="left:850px;top:0;width:1px;height:21px;background:rgba(255,255,255,.55)"></div>
<div class="a" style="left:898px;top:0;width:1px;height:21px;background:rgba(255,255,255,.55)"></div>
<div class="a" style="left:950px;top:0;width:1px;height:21px;background:rgba(255,255,255,.55)"></div>
<div class="a" style="left:1008px;top:0;width:1px;height:21px;background:rgba(255,255,255,.55)"></div>
<div class="a" style="left:1128px;top:0;width:1px;height:21px;background:rgba(255,255,255,.55)"></div>
<div class="a" style="left:1208px;top:0;width:1px;height:21px;background:rgba(255,255,255,.55)"></div>
</div>
<div style="left:55px;top:935px;width:1203px;height:26px;background:#87cefa;border:1px solid #6e7b85;border-left:none"></div>
<div style="left:6px;top:935px;width:50px;height:26px;background:#fff;border:1px solid #8a8a8a;border-left:none;border-top:2px solid #707070"></div>
<span style="left:16.0px;top:938.2px;font-size:13px;font-weight:bold;color:#d82020;transform:scaleX(0.977);">Total</span>
<div style="left:690px;top:935px;width:43px;height:26px;background:#fff;border:1px solid #6a6a6a;border-left-width:2px;border-top-width:2px"></div>
<span style="left:701.5px;top:939.9px;font-size:12px;font-weight:bold;color:#e01818;">175</span>
<div style="left:732px;top:935px;width:39px;height:26px;background:#fff;border:1px solid #6a6a6a;border-left-width:2px;border-top-width:2px"></div>
<span style="left:741.5px;top:939.9px;font-size:12px;font-weight:bold;color:#e01818;">173</span>
<div style="left:770px;top:935px;width:39px;height:26px;background:#fff;border:1px solid #6a6a6a;border-left-width:2px;border-top-width:2px"></div>
<span style="left:786.2px;top:939.9px;font-size:12px;font-weight:bold;color:#e01818;">0</span>
<div style="left:808px;top:935px;width:49px;height:26px;background:#fff;border:1px solid #6a6a6a;border-left-width:2px;border-top-width:2px"></div>
<span style="left:829.2px;top:939.9px;font-size:12px;font-weight:bold;color:#e01818;">1</span>
<div style="left:856px;top:935px;width:49px;height:26px;background:#fff;border:1px solid #6a6a6a;border-left-width:2px;border-top-width:2px"></div>
<span style="left:877.2px;top:939.9px;font-size:12px;font-weight:bold;color:#e01818;">4</span>
<div style="left:904px;top:935px;width:53px;height:26px;background:#fff;border:1px solid #6a6a6a;border-left-width:2px;border-top-width:2px"></div>
<span style="left:927.2px;top:939.9px;font-size:12px;font-weight:bold;color:#e01818;">0</span>
<div style="left:956px;top:935px;width:2px;height:26px;background:#6a6a6a"></div>
<div style="left:1257px;top:372px;width:17px;height:589px;background:#f7f7f7;"></div>
<div style="left:1257px;top:935px;width:1px;height:26px;background:#6e7b85"></div>
<div style="left:1257px;top:372px;width:17px;height:17px;background:#f0f0f0;border:1px solid #fff;border-right-color:#696969;border-bottom-color:#696969;box-shadow:inset -1px -1px 0 #a0a0a0"></div>
<svg style="left:1261px;top:378px" width="8" height="5" viewBox="0 0 8 5"><path d="M0 4.5 L4 0 L8 4.5 Z" fill="#000"/></svg>
<div style="left:1257px;top:389px;width:17px;height:90px;background:#f0f0f0;border:1px solid #fff;border-right-color:#696969;border-bottom-color:#696969;box-shadow:inset -1px -1px 0 #a0a0a0"></div>
<div style="left:1257px;top:944px;width:17px;height:17px;background:#f0f0f0;border:1px solid #fff;border-right-color:#696969;border-bottom-color:#696969;box-shadow:inset -1px -1px 0 #a0a0a0"></div>
<svg style="left:1261px;top:951px" width="8" height="5" viewBox="0 0 8 5"><path d="M0 0 L8 0 L4 4.5 Z" fill="#000"/></svg>
<div style="left:6px;top:961px;width:1268px;height:16px;background:#f7f7f7;"></div>
<div style="left:6px;top:961px;width:17px;height:16px;background:#f0f0f0;border:1px solid #fff;border-right-color:#696969;border-bottom-color:#696969;box-shadow:inset -1px -1px 0 #a0a0a0"></div>
<svg style="left:12px;top:965px" width="5" height="8" viewBox="0 0 5 8"><path d="M4.5 0 L0 4 L4.5 8 Z" fill="#000"/></svg>
<div style="left:23px;top:961px;width:598px;height:16px;background:#f0f0f0;border:1px solid #fff;border-right-color:#696969;border-bottom-color:#696969;box-shadow:inset -1px -1px 0 #a0a0a0"></div>
<div style="left:1240px;top:961px;width:17px;height:16px;background:#f0f0f0;border:1px solid #fff;border-right-color:#696969;border-bottom-color:#696969;box-shadow:inset -1px -1px 0 #a0a0a0"></div>
<svg style="left:1247px;top:965px" width="5" height="8" viewBox="0 0 5 8"><path d="M0 0 L4.5 4 L0 8 Z" fill="#000"/></svg>
<div style="left:1257px;top:961px;width:17px;height:16px;background:#f0f0f0"></div>
</body></html>
